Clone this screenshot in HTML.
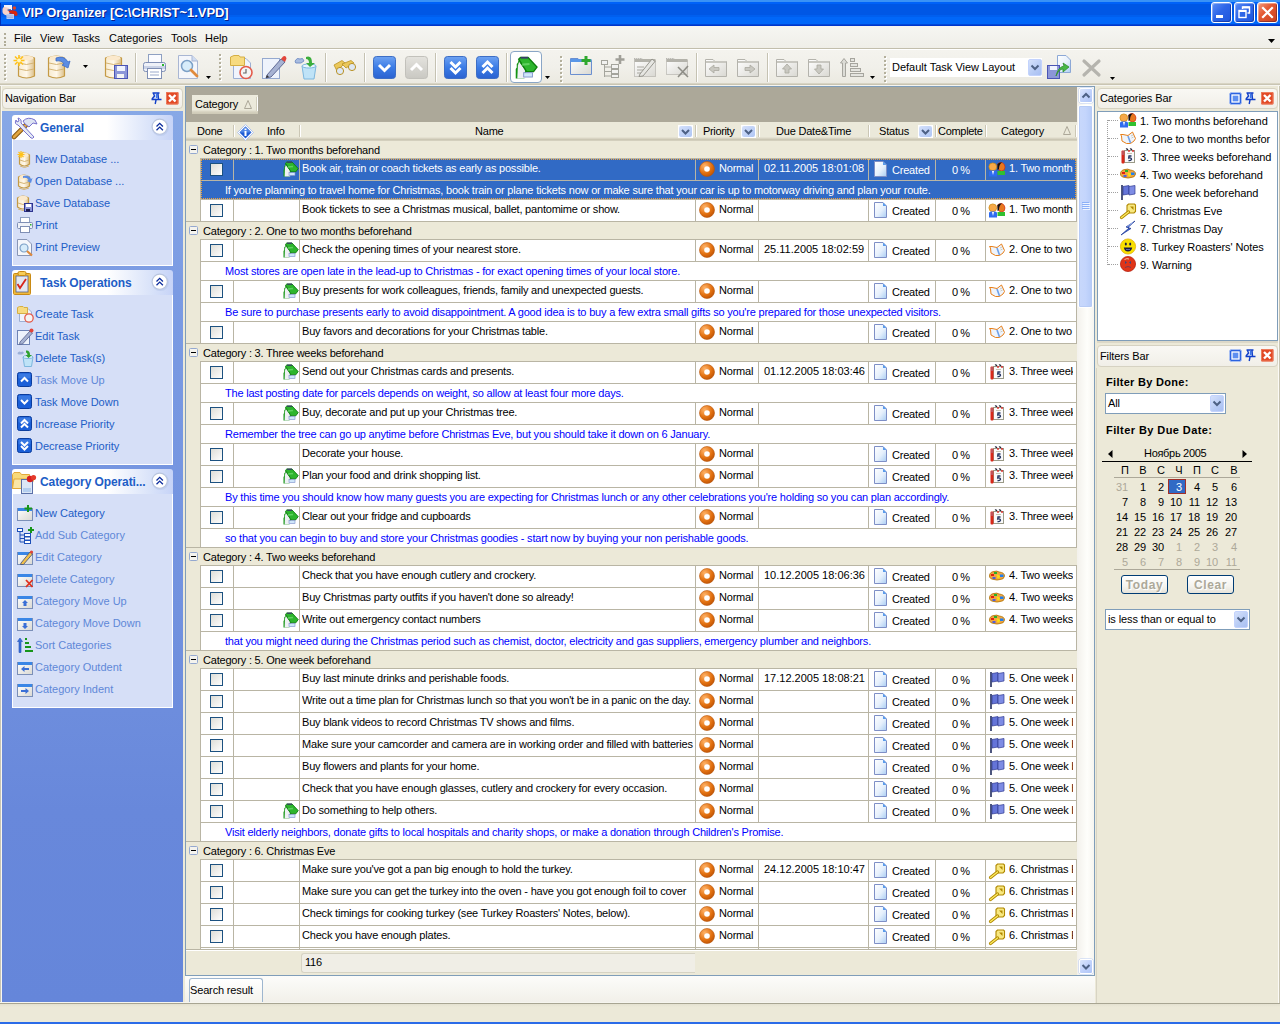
<!DOCTYPE html>
<html><head><meta charset="utf-8"><title>VIP Organizer</title>
<style>
html,body{margin:0;padding:0;}
body{width:1280px;height:1024px;overflow:hidden;position:relative;background:#ECE9D8;font-family:'Liberation Sans', sans-serif;font-size:11px;color:#000;}
body div{position:absolute;box-sizing:border-box;}
svg{position:absolute;overflow:visible;}
</style></head><body>
<div style="left:0px;top:0px;width:1280px;height:26px;background:linear-gradient(to bottom,#3A92F5 0px,#3A92F5 2px,#0062F8 2px,#0062F8 4px,#0057E5 4px,#0057E5 15px,#005FEF 15px,#005FEF 17px,#0067F9 17px,#0067F9 24px,#0048D8 24px,#0048D8 25px,#0036CC 25px);"></div><div style="left:0px;top:3px;width:1px;height:23px;background:#0030B8;"></div><svg style="left:0px;top:0px" width="26" height="26" viewBox="0 0 26 26" >
<rect x="4" y="5" width="8" height="5" fill="#F2F2FA"/>
<path d="M2.5 9 Q3 6.5 5 7 L9 8 L10 13 L7 15.5 Q3 14.5 2.5 12Z" fill="#F6D2CA"/>
<path d="M7 10 L8 9.5 L11 9 Q11 11 9 11Z" fill="#2A4FA8"/>
<path d="M8.5 11 Q12 9.5 16 11 Q18 12.5 17.5 15.5 L15 16 Q14 13 10 13.5Z" fill="#D8260E"/>
<circle cx="14.3" cy="8" r="1.8" fill="#E8401A"/>
<rect x="6.5" y="14" width="7.5" height="5" fill="#B9CBF2"/>
<path d="M7 16 H13 M7 17.5 H13" stroke="#8FA3D8" stroke-width=".6"/>
</svg><div style="left:22px;top:6px;font-size:13px;line-height:13px;color:#fff;white-space:nowrap;letter-spacing:-0.05px;font-weight:bold;text-shadow:1px 1px 0 #0A1E8A;">VIP Organizer [C:\CHRIST~1.VPD]</div><div style="left:1211px;top:2px;width:21px;height:21px;border:1px solid #fff;border-radius:3px;background:linear-gradient(135deg,#5C8DF5 0%,#2E66E8 45%,#1E55DC 100%);box-shadow:inset 1px 1px 0 rgba(255,255,255,.35), inset -1px -1px 0 rgba(0,0,60,.3);"></div><svg style="left:1211px;top:2px" width="21" height="21" viewBox="0 0 21 21" ><rect x="5" y="13" width="7" height="3" fill="#fff"/></svg><div style="left:1234px;top:2px;width:21px;height:21px;border:1px solid #fff;border-radius:3px;background:linear-gradient(135deg,#5C8DF5 0%,#2E66E8 45%,#1E55DC 100%);box-shadow:inset 1px 1px 0 rgba(255,255,255,.35), inset -1px -1px 0 rgba(0,0,60,.3);"></div><svg style="left:1234px;top:2px" width="21" height="21" viewBox="0 0 21 21" ><path d="M8.5 7 V5 H15.5 V11 H13.5" fill="none" stroke="#fff" stroke-width="1.4"/><rect x="5" y="8.5" width="7" height="7" fill="none" stroke="#fff" stroke-width="1.4"/><rect x="5" y="8" width="7" height="2" fill="#fff"/><rect x="8.5" y="4.5" width="7" height="2" fill="#fff"/></svg><div style="left:1257px;top:2px;width:21px;height:21px;border:1px solid #fff;border-radius:3px;background:linear-gradient(135deg,#F29B7E 0%,#E45A33 40%,#C9401E 100%);box-shadow:inset 1px 1px 0 rgba(255,255,255,.35), inset -1px -1px 0 rgba(0,0,60,.3);"></div><svg style="left:1257px;top:2px" width="21" height="21" viewBox="0 0 21 21" ><path d="M6 6 L15 15 M15 6 L6 15" stroke="#fff" stroke-width="2.2" stroke-linecap="square"/></svg><div style="left:0px;top:26px;width:1280px;height:22px;background:linear-gradient(to bottom,#F6F6F2,#EFEEE8);"></div><div style="left:0px;top:48px;width:1280px;height:1px;background:#C2BEAC;"></div><div style="left:0px;top:49px;width:1280px;height:1px;background:#FFFFFF;"></div><div style="left:4px;top:33px;width:2px;height:2px;background:#B0AC98;"></div><div style="left:4px;top:37px;width:2px;height:2px;background:#B0AC98;"></div><div style="left:4px;top:41px;width:2px;height:2px;background:#B0AC98;"></div><div style="left:4px;top:44px;width:2px;height:2px;background:#B0AC98;"></div><div style="left:14px;top:32px;font-size:11px;line-height:13px;color:#000;white-space:nowrap;">File</div><div style="left:40px;top:32px;font-size:11px;line-height:13px;color:#000;white-space:nowrap;">View</div><div style="left:72px;top:32px;font-size:11px;line-height:13px;color:#000;white-space:nowrap;">Tasks</div><div style="left:109px;top:32px;font-size:11px;line-height:13px;color:#000;white-space:nowrap;">Categories</div><div style="left:171px;top:32px;font-size:11px;line-height:13px;color:#000;white-space:nowrap;">Tools</div><div style="left:205px;top:32px;font-size:11px;line-height:13px;color:#000;white-space:nowrap;">Help</div><svg style="left:1268px;top:39px" width="7" height="5" viewBox="0 0 7 5" ><path d="M0 0 H7 L3.5 4Z" fill="#000"/></svg><div style="left:0px;top:50px;width:1280px;height:34px;background:linear-gradient(to bottom,#F4F3EE 0%,#F1F0EA 50%,#EBE9E0 100%);"></div><div style="left:0px;top:83px;width:1280px;height:1px;background:#D8D4C4;"></div><div style="left:0px;top:84px;width:1280px;height:1px;background:#C9C5B3;"></div><div style="left:0px;top:85px;width:1280px;height:1px;background:#F6F5F0;"></div><div style="left:4px;top:54px;width:2px;height:2px;background:#B4B09C;box-shadow:1px 1px 0 #fff;"></div><div style="left:4px;top:58px;width:2px;height:2px;background:#B4B09C;box-shadow:1px 1px 0 #fff;"></div><div style="left:4px;top:62px;width:2px;height:2px;background:#B4B09C;box-shadow:1px 1px 0 #fff;"></div><div style="left:4px;top:66px;width:2px;height:2px;background:#B4B09C;box-shadow:1px 1px 0 #fff;"></div><div style="left:4px;top:70px;width:2px;height:2px;background:#B4B09C;box-shadow:1px 1px 0 #fff;"></div><div style="left:4px;top:74px;width:2px;height:2px;background:#B4B09C;box-shadow:1px 1px 0 #fff;"></div><div style="left:4px;top:78px;width:2px;height:2px;background:#B4B09C;box-shadow:1px 1px 0 #fff;"></div><div style="left:219px;top:54px;width:2px;height:2px;background:#B4B09C;box-shadow:1px 1px 0 #fff;"></div><div style="left:219px;top:58px;width:2px;height:2px;background:#B4B09C;box-shadow:1px 1px 0 #fff;"></div><div style="left:219px;top:62px;width:2px;height:2px;background:#B4B09C;box-shadow:1px 1px 0 #fff;"></div><div style="left:219px;top:66px;width:2px;height:2px;background:#B4B09C;box-shadow:1px 1px 0 #fff;"></div><div style="left:219px;top:70px;width:2px;height:2px;background:#B4B09C;box-shadow:1px 1px 0 #fff;"></div><div style="left:219px;top:74px;width:2px;height:2px;background:#B4B09C;box-shadow:1px 1px 0 #fff;"></div><div style="left:219px;top:78px;width:2px;height:2px;background:#B4B09C;box-shadow:1px 1px 0 #fff;"></div><div style="left:560px;top:56px;width:2px;height:2px;background:#B4B09C;box-shadow:1px 1px 0 #fff;"></div><div style="left:560px;top:60px;width:2px;height:2px;background:#B4B09C;box-shadow:1px 1px 0 #fff;"></div><div style="left:560px;top:64px;width:2px;height:2px;background:#B4B09C;box-shadow:1px 1px 0 #fff;"></div><div style="left:560px;top:68px;width:2px;height:2px;background:#B4B09C;box-shadow:1px 1px 0 #fff;"></div><div style="left:560px;top:72px;width:2px;height:2px;background:#B4B09C;box-shadow:1px 1px 0 #fff;"></div><div style="left:560px;top:76px;width:2px;height:2px;background:#B4B09C;box-shadow:1px 1px 0 #fff;"></div><div style="left:560px;top:80px;width:2px;height:2px;background:#B4B09C;box-shadow:1px 1px 0 #fff;"></div><div style="left:884px;top:56px;width:2px;height:2px;background:#B4B09C;box-shadow:1px 1px 0 #fff;"></div><div style="left:884px;top:60px;width:2px;height:2px;background:#B4B09C;box-shadow:1px 1px 0 #fff;"></div><div style="left:884px;top:64px;width:2px;height:2px;background:#B4B09C;box-shadow:1px 1px 0 #fff;"></div><div style="left:884px;top:68px;width:2px;height:2px;background:#B4B09C;box-shadow:1px 1px 0 #fff;"></div><div style="left:884px;top:72px;width:2px;height:2px;background:#B4B09C;box-shadow:1px 1px 0 #fff;"></div><div style="left:884px;top:76px;width:2px;height:2px;background:#B4B09C;box-shadow:1px 1px 0 #fff;"></div><div style="left:884px;top:80px;width:2px;height:2px;background:#B4B09C;box-shadow:1px 1px 0 #fff;"></div><div style="left:135px;top:53px;width:1px;height:29px;background:#C5C2B2;box-shadow:1px 0 0 #fff;"></div><div style="left:325px;top:53px;width:1px;height:29px;background:#C5C2B2;box-shadow:1px 0 0 #fff;"></div><div style="left:364px;top:53px;width:1px;height:29px;background:#C5C2B2;box-shadow:1px 0 0 #fff;"></div><div style="left:435px;top:53px;width:1px;height:29px;background:#C5C2B2;box-shadow:1px 0 0 #fff;"></div><div style="left:506px;top:53px;width:1px;height:29px;background:#C5C2B2;box-shadow:1px 0 0 #fff;"></div><div style="left:696px;top:53px;width:1px;height:29px;background:#C5C2B2;box-shadow:1px 0 0 #fff;"></div><div style="left:767px;top:53px;width:1px;height:29px;background:#C5C2B2;box-shadow:1px 0 0 #fff;"></div><svg style="left:0;top:0" width="0" height="0"><defs><linearGradient id="cylg" x1="0" x2="1"><stop offset="0" stop-color="#F7EBD0"/><stop offset=".5" stop-color="#FFF8EA"/><stop offset="1" stop-color="#DCC08A"/></linearGradient></defs><defs>
<linearGradient id="bluebtn" x1="0" y1="0" x2="0" y2="1"><stop offset="0" stop-color="#6FA3F2"/><stop offset=".5" stop-color="#3B7CE6"/><stop offset="1" stop-color="#2A62D0"/></linearGradient>
<linearGradient id="graybtn" x1="0" y1="0" x2="0" y2="1"><stop offset="0" stop-color="#E4E3DE"/><stop offset="1" stop-color="#C9C8C2"/></linearGradient>
<linearGradient id="docg" x1="0" y1="0" x2="1" y2="1"><stop offset="0" stop-color="#FFFFFF"/><stop offset=".55" stop-color="#E6F0FC"/><stop offset="1" stop-color="#A9CDF3"/></linearGradient>
<linearGradient id="foldg" x1="0" y1="0" x2="1" y2="1"><stop offset="0" stop-color="#FFFFFF"/><stop offset="1" stop-color="#D9D8D2"/></linearGradient>
<radialGradient id="orng" cx=".35" cy=".3" r=".8"><stop offset="0" stop-color="#FFB46A"/><stop offset=".6" stop-color="#E2700F"/><stop offset="1" stop-color="#B84F05"/></radialGradient>
<linearGradient id="chkg" x1="0" y1="0" x2="1" y2="1"><stop offset="0" stop-color="#DCDCD6"/><stop offset="1" stop-color="#FFFFFF"/></linearGradient>
</defs></svg><svg style="left:13px;top:55px" width="24" height="25" viewBox="0 0 24 25" ><path d="M5.5 3 Q13.5 -1 21.5 3 V21 Q13.5 25 5.5 21Z" fill="url(#cylg)" stroke="#C49A45" stroke-width="1.2"/><path d="M6 8 Q13.5 11 21 8 M6 14 Q13.5 17 21 14" fill="none" stroke="#D5B577" stroke-width="1"/><ellipse cx="13.5" cy="3" rx="7.0" ry="2.3" fill="#FBE9CC"/><g stroke="#FFC21A" stroke-width="1.6"><path d="M6 0 V11 M0.5 5.5 H11.5 M2 1.5 L10 9.5 M10 1.5 L2 9.5"/></g><circle cx="6" cy="5.5" r="2" fill="#FFF7C0"/></svg><svg style="left:48px;top:55px" width="24" height="25" viewBox="0 0 24 25" ><path d="M0.5 3 Q8.5 -1 16.5 3 V21 Q8.5 25 0.5 21Z" fill="url(#cylg)" stroke="#C49A45" stroke-width="1.2"/><path d="M1 8 Q8.5 11 16 8 M1 14 Q8.5 17 16 14" fill="none" stroke="#D5B577" stroke-width="1"/><ellipse cx="8.5" cy="3" rx="7.0" ry="2.3" fill="#FBE9CC"/><path d="M8 3 Q16 0 20 7 L22 6 L20 13 L14 10 L16 9 Q14 5 8 6Z" fill="#5C8DE3" stroke="#3D6BC4" stroke-width=".8"/></svg><svg style="left:83px;top:65px" width="5" height="3" viewBox="0 0 5 3" ><path d="M0 0 H5 L2.5 3Z" fill="#000"/></svg><svg style="left:105px;top:55px" width="24" height="25" viewBox="0 0 24 25" ><path d="M0.5 3 Q8.5 -1 16.5 3 V21 Q8.5 25 0.5 21Z" fill="url(#cylg)" stroke="#C49A45" stroke-width="1.2"/><path d="M1 8 Q8.5 11 16 8 M1 14 Q8.5 17 16 14" fill="none" stroke="#D5B577" stroke-width="1"/><ellipse cx="8.5" cy="3" rx="7.0" ry="2.3" fill="#FBE9CC"/><rect x="9.5" y="10.5" width="13" height="13" fill="#8C96D8" stroke="#4B55B5"/><rect x="12" y="11" width="8" height="5" fill="#F0F4FF"/><rect x="12" y="19" width="7" height="4" fill="#F4F4F4"/></svg><svg style="left:143px;top:54px" width="24" height="26" viewBox="0 0 24 26" ><rect x="5.5" y="0.5" width="13" height="8" fill="#FAFBFF" stroke="#8EA0C2"/>
<rect x="0.5" y="8.5" width="22" height="9" rx="2" fill="#EEF1F8" stroke="#7F8FB5"/>
<rect x="1" y="12" width="21" height="3" fill="#C9D2E6"/>
<rect x="19" y="10" width="2" height="2" fill="#2BB52B"/>
<rect x="4.5" y="14.5" width="14" height="10" fill="#FFFFFF" stroke="#7F8FB5"/>
<path d="M7 18 H16 M7 21 H16" stroke="#9AA9CB"/></svg><svg style="left:178px;top:55px" width="23" height="24" viewBox="0 0 23 24" ><path d="M0.5 0.5 H14 L19.5 6 V23.5 H0.5Z" fill="#F4F6FB" stroke="#A9B6D3"/>
<path d="M14 0.5 V6 H19.5" fill="#CFDCF2" stroke="#A9B6D3"/>
<circle cx="9" cy="11" r="5.5" fill="#D7ECFA" stroke="#7CA0C7" stroke-width="1.5"/>
<path d="M13 15 L19 21" stroke="#E08A3C" stroke-width="2.8" stroke-linecap="round"/></svg><svg style="left:206px;top:76px" width="5" height="3" viewBox="0 0 5 3" ><path d="M0 0 H5 L2.5 3Z" fill="#000"/></svg><svg style="left:230px;top:55px" width="25" height="25" viewBox="0 0 25 25" ><path d="M3.5 3.5 H16 L20.5 8 V23.5 H3.5Z" fill="#F0F4FC" stroke="#9DB0D4"/>
<path d="M0.5 2 L4 0.5 H9 L10 2 H14.5 V10.5 H0.5Z" fill="#F7DB80" stroke="#D5AF44"/>
<circle cx="16" cy="17.5" r="6" fill="#F4F4F4" stroke="#E45B4B" stroke-width="1.6"/>
<path d="M16 14 V18 H13" stroke="#666" stroke-width="1.2" fill="none"/></svg><svg style="left:262px;top:55px" width="25" height="25" viewBox="0 0 25 25" ><rect x="0.5" y="3.5" width="17" height="20" fill="#EEF3FC" stroke="#95A9CF"/>
<path d="M5 20 L19 4 L23 7 L9 22 L4 23Z" fill="#A7B3D3" stroke="#56608C" stroke-width=".9"/>
<path d="M19 4 L21 1.5 Q23 0.5 24 2 L24.5 3.5 L23 7Z" fill="#E2453B"/>
<path d="M4 23 L5 20 L7 22Z" fill="#333"/></svg><svg style="left:294px;top:55px" width="25" height="25" viewBox="0 0 25 25" ><path d="M8 11 H22 L20 24 H10Z" fill="#BFE3F7" stroke="#7DB7DE"/>
<ellipse cx="15" cy="11" rx="7" ry="2" fill="#E8F6FD" stroke="#7DB7DE"/>
<path d="M12 2 Q18 0 18 8 L21 8 L16 12 L12 8 L15 8 Q15 4 12 4Z" fill="#3BAE3B"/>
<path d="M1 6 Q3 2 6 4 Q9 2 10 6 Q7 9 4 8 Q1 9 1 6Z" fill="#A8BCE0" stroke="#6A86C0" stroke-width=".8"/></svg><svg style="left:333px;top:60px" width="25" height="15" viewBox="0 0 25 15" ><path d="M1 5 L9 0.5 L12 3 L4 11Z" fill="#EBC85A" stroke="#B99225" stroke-width=".8"/>
<path d="M9 4 L18 0.5 L21 3 L13 8Z" fill="#EBC85A" stroke="#B99225" stroke-width=".8"/>
<circle cx="7" cy="11" r="3.6" fill="#DDE7F3" stroke="#B99225"/>
<circle cx="19" cy="7" r="3.6" fill="#DDE7F3" stroke="#B99225"/></svg><svg style="left:373px;top:56px" width="23" height="23" viewBox="0 0 23 23" ><rect x="0.5" y="0.5" width="22" height="22" rx="3" fill="url(#bluebtn)" stroke="#3D6EC5"/><path d="M6 9 L11.5 14.5 L17 9" fill="none" stroke="#fff" stroke-width="3"/></svg><svg style="left:405px;top:56px" width="23" height="23" viewBox="0 0 23 23" ><rect x="0.5" y="0.5" width="22" height="22" rx="3" fill="url(#graybtn)" stroke="#C2C1BB"/><path d="M6 14 L11.5 8.5 L17 14" fill="none" stroke="#fff" stroke-width="3"/></svg><svg style="left:444px;top:56px" width="23" height="23" viewBox="0 0 23 23" ><rect x="0.5" y="0.5" width="22" height="22" rx="3" fill="url(#bluebtn)" stroke="#3D6EC5"/><path d="M6.5 6 L11.5 11 L16.5 6 M6.5 12 L11.5 17 L16.5 12" fill="none" stroke="#fff" stroke-width="3"/></svg><svg style="left:476px;top:56px" width="23" height="23" viewBox="0 0 23 23" ><rect x="0.5" y="0.5" width="22" height="22" rx="3" fill="url(#bluebtn)" stroke="#3D6EC5"/><path d="M6.5 11 L11.5 6 L16.5 11 M6.5 17 L11.5 12 L16.5 17" fill="none" stroke="#fff" stroke-width="3"/></svg><div style="left:510px;top:51px;width:32px;height:32px;background:#fff;border:1px solid #8AA6C6;border-radius:4px;"></div><svg style="left:515px;top:56px" width="24" height="24" viewBox="0 0 24 24" ><g transform="scale(1.45)"><path d="M0.5 15.5 V9 L1.2 8 V5.5 L2 4.5 L2.5 2.5 L8 10.5 L6.5 15.5Z" fill="#149414"/>
<path d="M1.6 15.5 L2 6.5 L2.8 4 L6.8 9.5 L7.2 15.5Z" fill="#EEF0F4"/>
<path d="M2.5 2.2 L3.8 1 H9 L15.2 7.6 L12.8 10.8 H8Z" fill="#2DB52D" stroke="#0B7D0B" stroke-width="0.9"/>
<path d="M5 6 L10 5.5" stroke="#5FD05F" stroke-width="1.5"/>
<path d="M4 1.2 H9" stroke="#3A3A6A" stroke-width="1.2"/>
<rect x="6" y="11.5" width="6" height="3" fill="#CFE6FA" stroke="#7A8CC8" stroke-width=".6"/></g></svg><svg style="left:545px;top:76px" width="5" height="3" viewBox="0 0 5 3" ><path d="M0 0 H5 L2.5 3Z" fill="#000"/></svg><svg style="left:570px;top:55px" width="24" height="22" viewBox="0 0 24 22" ><path d="M0.5 3.5 V19.5 H21.5 V5.5 H10 L8 3.5Z" fill="url(#foldg)" stroke="#6B8FD0"/><rect x="0.5" y="4" width="21" height="3" fill="#5A97E8"/><path d="M16 1 V10 M11.5 5.5 H20.5" stroke="#2EA82E" stroke-width="3"/></svg><svg style="left:601px;top:55px" width="25" height="23" viewBox="0 0 25 23" ><rect x="0.5" y="5.5" width="6" height="4" fill="#F2F2F0" stroke="#A4A49C"/>
<path d="M3.5 9.5 V22 M3.5 12 H11 M3.5 16.5 H11 M3.5 21 H11" stroke="#A4A49C"/>
<rect x="10.5" y="9.5" width="7" height="4" fill="#F2F2F0" stroke="#A4A49C"/>
<rect x="10.5" y="14.5" width="7" height="4" fill="#F2F2F0" stroke="#A4A49C"/>
<rect x="10.5" y="19.5" width="7" height="3" fill="#F2F2F0" stroke="#A4A49C"/>
<path d="M19 0 V9 M14.5 4.5 H23.5" stroke="#A09F98" stroke-width="2.6"/></svg><svg style="left:634px;top:55px" width="23" height="22" viewBox="0 0 23 22" ><path d="M0.5 3.5 V21.5 H21.5 V5.5 H10 L8 3.5Z" fill="url(#foldg)" stroke="#A2A19A" stroke-dasharray="1 1"/>
<rect x="0.5" y="4" width="21" height="3" fill="#B3B2AA"/>
<path d="M3 12 H10 M3 15 H10 M3 18 H10" stroke="#A8A79F"/>
<path d="M6 19 L18 4 L21 6.5 L9 21 L5 21.5Z" fill="#E6E6E2" stroke="#8E8D86" stroke-width=".9"/></svg><svg style="left:666px;top:55px" width="24" height="23" viewBox="0 0 24 23" ><path d="M0.5 3.5 V19.5 H21.5 V5.5 H10 L8 3.5Z" fill="url(#foldg)" stroke="#A2A19A" stroke-dasharray="1 1"/>
<rect x="0.5" y="4" width="21" height="3" fill="#B3B2AA"/>
<path d="M12 12 L22 22 M22 11 L12 22" stroke="#8E8D86" stroke-width="1.6"/></svg><svg style="left:705px;top:58px" width="23" height="19" viewBox="0 0 23 19" ><path d="M0.5 1.5 V18.5 H21.5 V3.5 H10 L8 1.5 H0.5Z" fill="url(#foldg)" stroke="#B4B3AC"/><rect x="1" y="3" width="20" height="2" fill="#C8C7C0"/><path d="M4 11 L9 7 V9.5 H14 V12.5 H9 V15Z" fill="#C9C8C1" stroke="#A9A8A0" stroke-width=".8"/></svg><svg style="left:737px;top:58px" width="23" height="19" viewBox="0 0 23 19" ><path d="M0.5 1.5 V18.5 H21.5 V3.5 H10 L8 1.5 H0.5Z" fill="url(#foldg)" stroke="#B4B3AC"/><rect x="1" y="3" width="20" height="2" fill="#C8C7C0"/><path d="M18 11 L13 7 V9.5 H8 V12.5 H13 V15Z" fill="#C9C8C1" stroke="#A9A8A0" stroke-width=".8"/></svg><svg style="left:776px;top:58px" width="23" height="19" viewBox="0 0 23 19" ><path d="M0.5 1.5 V18.5 H21.5 V3.5 H10 L8 1.5 H0.5Z" fill="url(#foldg)" stroke="#B4B3AC"/><rect x="1" y="3" width="20" height="2" fill="#C8C7C0"/><path d="M11 6 L15.5 11 H13 V15 H9 V11 H6.5Z" fill="#C9C8C1" stroke="#A9A8A0" stroke-width=".8"/></svg><svg style="left:808px;top:58px" width="23" height="19" viewBox="0 0 23 19" ><path d="M0.5 1.5 V18.5 H21.5 V3.5 H10 L8 1.5 H0.5Z" fill="url(#foldg)" stroke="#B4B3AC"/><rect x="1" y="3" width="20" height="2" fill="#C8C7C0"/><path d="M11 16 L15.5 11 H13 V7 H9 V11 H6.5Z" fill="#C9C8C1" stroke="#A9A8A0" stroke-width=".8"/></svg><svg style="left:840px;top:58px" width="24" height="19" viewBox="0 0 24 19" ><path d="M4 0.5 L7.5 5 H5.5 V18.5 H2.5 V5 H0.5Z" fill="#DCDCD6" stroke="#A6A59E"/>
<rect x="10.5" y="0.5" width="4" height="3" fill="#E4E4DF" stroke="#A6A59E"/>
<rect x="10.5" y="5.5" width="7" height="3" fill="#E4E4DF" stroke="#A6A59E"/>
<rect x="10.5" y="10.5" width="10" height="3" fill="#E4E4DF" stroke="#A6A59E"/>
<rect x="10.5" y="15.5" width="13" height="3" fill="#E4E4DF" stroke="#A6A59E"/></svg><svg style="left:870px;top:76px" width="5" height="3" viewBox="0 0 5 3" ><path d="M0 0 H5 L2.5 3Z" fill="#000"/></svg><div style="left:890px;top:58px;width:152px;height:19px;background:#fff;"></div><div style="left:892px;top:61px;font-size:11px;line-height:13px;color:#000;white-space:nowrap;">Default Task View Layout</div><div style="left:1028px;top:59px;width:14px;height:17px;border-radius:2px;background:linear-gradient(135deg,#D5E1FB 0%,#B7CBF5 60%,#A8BFF2 100%);border:1px solid #C3D3FD;"></div><svg style="left:1028px;top:59px" width="14" height="17" viewBox="0 0 14 17" ><path d="M3.5 6.5 L7.0 10.0 L10.5 6.5" fill="none" stroke="#4D6185" stroke-width="2"/></svg><svg style="left:1047px;top:55px" width="25" height="25" viewBox="0 0 25 25" ><path d="M10.5 0.5 H19 L23.5 5 V17.5 H10.5Z" fill="url(#docg)" stroke="#8CA8D6"/>
<rect x="0.5" y="10.5" width="12" height="13" fill="#8C96D8" stroke="#4B55B5"/><rect x="3" y="11" width="7" height="4" fill="#F0F4FF"/>
<path d="M9 21 Q11 12 17 11 L16 8 L22 12 L16 17 L16 14 Q12 14 9 21Z" fill="#46B846" stroke="#2E8E2E" stroke-width=".8"/></svg><svg style="left:1082px;top:60px" width="19" height="16" viewBox="0 0 19 16" ><path d="M2 1 L17 15 M17 1 L2 15" stroke="#B5B4AE" stroke-width="3.2" stroke-linecap="round"/></svg><svg style="left:1110px;top:77px" width="5" height="3" viewBox="0 0 5 3" ><path d="M0 0 H5 L2.5 3Z" fill="#000"/></svg><div style="left:0px;top:86px;width:185px;height:917px;background:#ECE9D8;"></div><div style="left:0px;top:86px;width:1px;height:917px;background:#C8C4B2;"></div><div style="left:1px;top:86px;width:1px;height:917px;background:#F8F7F2;"></div><div style="left:2px;top:88px;width:181px;height:21px;border:1px solid #D6D2C2;border-radius:4px;background:linear-gradient(to bottom,#F9F8F4,#F1EFE8);"></div><div style="left:5px;top:92px;font-size:11px;line-height:13px;color:#000;white-space:nowrap;letter-spacing:-0.1px;">Navigation Bar</div><svg style="left:151px;top:92px" width="12" height="13" viewBox="0 0 12 13" ><path d="M2.5 1.5 L3.5 4 L1.5 7 H8 L7 1.5Z" fill="#D6E0FA"/><rect x="5" y="2" width="1.5" height="4" fill="#3C78E8"/><path d="M1.5 1 H8.5 M2.5 1.5 L3.5 4 L1 7 M7 1.5 L7.5 7 M0.5 7.5 H10.5 M5 8 L4.2 12" fill="none" stroke="#1240C8" stroke-width="1.4"/></svg><svg style="left:166px;top:92px" width="13" height="13" viewBox="0 0 13 13" ><rect x="0" y="0" width="12.5" height="12.5" rx="1" fill="#E24A26"/><rect x="0.5" y="0.5" width="11.5" height="11.5" rx="1" fill="none" stroke="#F08A6C" stroke-width=".8"/><path d="M3 3 L9.5 9.5 M9.5 3 L3 9.5" stroke="#fff" stroke-width="2.4"/></svg><div style="left:2px;top:111px;width:181px;height:891px;background:linear-gradient(to bottom,#87A8E6 0px,#7B9BE3 180px,#7292DF 500px,#6888DB 700px,#6586DA 891px);"></div><div style="left:12px;top:115px;width:161px;height:25px;border-radius:3px 3px 0 0;background:linear-gradient(to right,#FFFFFF 0px,#FFFFFF 95px,#D8E2F9 140px,#C6D3F7 161px);"></div><svg style="left:12px;top:116px" width="26" height="24" viewBox="0 0 26 24" ><path d="M2 21 L14 9" stroke="#8A5A12" stroke-width="4.6" stroke-linecap="round"/><path d="M2 21 L14 9" stroke="#E2A640" stroke-width="2.6" stroke-linecap="round"/>
<path d="M11 5 Q16 0 23 4 L25 8 L21 7 L17 11 L13 8Z" fill="#DDE3F2" stroke="#6A63C8" stroke-width=".9"/>
<path d="M4 4 Q2 8 6 9 L19 22 Q21 23 22 21 L9 7 Q10 3 6 2 L7 5 L5 6Z" fill="#E6EBF5" stroke="#6A63C8" stroke-width=".9"/></svg><svg style="left:150px;top:117px" width="20" height="20" viewBox="0 0 20 20" ><circle cx="10.3" cy="10.3" r="8.6" fill="#AFC0E6" opacity=".45"/><circle cx="9.7" cy="9.7" r="7.6" fill="#fff" stroke="#B9C5DE" stroke-width="1.1"/><path d="M6.5 9.5 L9.7 6.3 L12.9 9.5 M6.5 13.3 L9.7 10.1 L12.9 13.3" fill="none" stroke="#0C2C9C" stroke-width="1.3"/></svg><div style="left:40px;top:122px;font-size:12px;line-height:13px;color:#215DC6;white-space:nowrap;letter-spacing:-0.1px;font-weight:bold;">General</div><div style="left:12px;top:140px;width:161px;height:126px;background:#D6DFF7;border:1px solid #fff;border-top:none;"></div><svg style="left:17px;top:151px" width="17" height="17" viewBox="0 0 17 17" ><path d="M2.5 4 Q7.5 0 12.5 4 V13 Q7.5 17 2.5 13Z" fill="url(#cylg)" stroke="#C49A45" stroke-width="1.2"/><path d="M3 9 Q7.5 12 12 9 M3 15 Q7.5 18 12 15" fill="none" stroke="#D5B577" stroke-width="1"/><ellipse cx="7.5" cy="4" rx="4.0" ry="2.3" fill="#FBE9CC"/><path d="M4 0 V7 M0.5 3.5 H7.5 M1.5 1 L6.5 6 M6.5 1 L1.5 6" stroke="#FFC21A" stroke-width="1.2"/></svg><div style="left:35px;top:153px;font-size:11px;line-height:13px;color:#215DC6;white-space:nowrap;">New Database ...</div><svg style="left:17px;top:173px" width="17" height="17" viewBox="0 0 17 17" ><path d="M1.5 4 Q7.0 0 12.5 4 V13 Q7.0 17 1.5 13Z" fill="url(#cylg)" stroke="#C49A45" stroke-width="1.2"/><path d="M2 9 Q7.0 12 12 9 M2 15 Q7.0 18 12 15" fill="none" stroke="#D5B577" stroke-width="1"/><ellipse cx="7.0" cy="4" rx="4.5" ry="2.3" fill="#FBE9CC"/><path d="M6 3 Q12 1 14 6 L15.5 5 L14 10 L10 8 L11.5 7 Q10 4 6 5Z" fill="#5C8DE3"/></svg><div style="left:35px;top:175px;font-size:11px;line-height:13px;color:#215DC6;white-space:nowrap;">Open Database ...</div><svg style="left:17px;top:195px" width="17" height="17" viewBox="0 0 17 17" ><path d="M0.5 3 Q6.0 -1 11.5 3 V12 Q6.0 16 0.5 12Z" fill="url(#cylg)" stroke="#C49A45" stroke-width="1.2"/><path d="M1 8 Q6.0 11 11 8 M1 14 Q6.0 17 11 14" fill="none" stroke="#D5B577" stroke-width="1"/><ellipse cx="6.0" cy="3" rx="4.5" ry="2.3" fill="#FBE9CC"/><rect x="7.5" y="8.5" width="8" height="8" fill="#8C96D8" stroke="#2E3590"/><rect x="9" y="9" width="5" height="3" fill="#fff"/><rect x="9" y="14" width="4" height="2.5" fill="#1C1C50"/></svg><div style="left:35px;top:197px;font-size:11px;line-height:13px;color:#215DC6;white-space:nowrap;">Save Database</div><svg style="left:17px;top:217px" width="17" height="17" viewBox="0 0 17 17" ><rect x="3.5" y="0.5" width="9" height="5" fill="#fff" stroke="#8EA0C2"/><rect x="0.5" y="5.5" width="15" height="6" rx="1" fill="#EEF1F8" stroke="#7F8FB5"/><rect x="13" y="7" width="1.5" height="1.5" fill="#2BB52B"/><rect x="3.5" y="9.5" width="9" height="6" fill="#fff" stroke="#7F8FB5"/></svg><div style="left:35px;top:219px;font-size:11px;line-height:13px;color:#215DC6;white-space:nowrap;">Print</div><svg style="left:17px;top:239px" width="17" height="17" viewBox="0 0 17 17" ><path d="M0.5 0.5 H10 L14.5 5 V16.5 H0.5Z" fill="#F4F6FB" stroke="#8996B6"/><circle cx="7" cy="9" r="4" fill="#D7ECFA" stroke="#7CA0C7" stroke-width="1.2"/><path d="M10 12 L15 16.5" stroke="#E08A3C" stroke-width="2.2"/></svg><div style="left:35px;top:241px;font-size:11px;line-height:13px;color:#215DC6;white-space:nowrap;">Print Preview</div><div style="left:12px;top:270px;width:161px;height:25px;border-radius:3px 3px 0 0;background:linear-gradient(to right,#FFFFFF 0px,#FFFFFF 95px,#D8E2F9 140px,#C6D3F7 161px);"></div><svg style="left:12px;top:271px" width="26" height="24" viewBox="0 0 26 24" ><rect x="1.5" y="2.5" width="17" height="21" rx="1" fill="#F0B93A" stroke="#C98A14"/><rect x="4" y="5" width="12" height="16" fill="#E3E7F0" stroke="#53608A" stroke-width=".8"/>
<rect x="6" y="0.5" width="8" height="4" rx="1.5" fill="#F7CD59" stroke="#C98A14"/><path d="M5.5 13 L8 17 L14 8" fill="none" stroke="#D8261C" stroke-width="1.8"/></svg><svg style="left:150px;top:272px" width="20" height="20" viewBox="0 0 20 20" ><circle cx="10.3" cy="10.3" r="8.6" fill="#AFC0E6" opacity=".45"/><circle cx="9.7" cy="9.7" r="7.6" fill="#fff" stroke="#B9C5DE" stroke-width="1.1"/><path d="M6.5 9.5 L9.7 6.3 L12.9 9.5 M6.5 13.3 L9.7 10.1 L12.9 13.3" fill="none" stroke="#0C2C9C" stroke-width="1.3"/></svg><div style="left:40px;top:277px;font-size:12px;line-height:13px;color:#215DC6;white-space:nowrap;letter-spacing:-0.1px;font-weight:bold;">Task Operations</div><div style="left:12px;top:295px;width:161px;height:170px;background:#D6DFF7;border:1px solid #fff;border-top:none;"></div><svg style="left:17px;top:306px" width="17" height="17" viewBox="0 0 17 17" ><path d="M2.5 2.5 H11 L14.5 6 V15.5 H2.5Z" fill="#F0F4FC" stroke="#9DB0D4"/><path d="M0.5 1.5 L2.5 0.5 H6 L7 1.5 H10.5 V7.5 H0.5Z" fill="#F7DB80" stroke="#D5AF44"/><circle cx="12" cy="12" r="4.2" fill="#F4F4F4" stroke="#E45B4B" stroke-width="1.3"/></svg><div style="left:35px;top:308px;font-size:11px;line-height:13px;color:#215DC6;white-space:nowrap;">Create Task</div><svg style="left:17px;top:328px" width="17" height="17" viewBox="0 0 17 17" ><rect x="0.5" y="2.5" width="12" height="14" fill="#EEF3FC" stroke="#6E83B5"/><path d="M3 14 L13 3 L15.5 5 L5.5 16 L2.5 16.5Z" fill="#A7B3D3" stroke="#56608C" stroke-width=".8"/><circle cx="14.5" cy="2.5" r="2" fill="#E2453B"/></svg><div style="left:35px;top:330px;font-size:11px;line-height:13px;color:#215DC6;white-space:nowrap;">Edit Task</div><svg style="left:17px;top:350px" width="17" height="17" viewBox="0 0 17 17" ><path d="M6 7 H16 L14.5 16.5 H7.5Z" fill="#BFE3F7" stroke="#7DB7DE"/><ellipse cx="11" cy="7" rx="5" ry="1.5" fill="#E8F6FD" stroke="#7DB7DE"/><path d="M9 0.5 Q13 0 13 5 L15 5 L11.5 8 L8.5 5 L10.5 5 Q10.5 2.5 9 2.5Z" fill="#2EA12E"/><path d="M0.5 3 Q2 0.5 4 2 Q6 0.5 7 3 Q5 5 3 4.5 Q0.5 5 0.5 3Z" fill="#9BB0D8"/></svg><div style="left:35px;top:352px;font-size:11px;line-height:13px;color:#215DC6;white-space:nowrap;">Delete Task(s)</div><svg style="left:17px;top:372px" width="17" height="17" viewBox="0 0 17 17" ><rect x="0.5" y="0.5" width="14" height="14" rx="2" fill="#1A5FD8" stroke="#0B3D9E"/><rect x="1.5" y="1.5" width="12" height="5" rx="1" fill="#4F8BEA" opacity=".6"/><path d="M4 9.5 L7.5 6 L11 9.5" fill="none" stroke="#fff" stroke-width="2"/></svg><div style="left:35px;top:374px;font-size:11px;line-height:13px;color:#5F88D8;white-space:nowrap;">Task Move Up</div><svg style="left:17px;top:394px" width="17" height="17" viewBox="0 0 17 17" ><rect x="0.5" y="0.5" width="14" height="14" rx="2" fill="#1A5FD8" stroke="#0B3D9E"/><rect x="1.5" y="1.5" width="12" height="5" rx="1" fill="#4F8BEA" opacity=".6"/><path d="M4 6 L7.5 9.5 L11 6" fill="none" stroke="#fff" stroke-width="2"/></svg><div style="left:35px;top:396px;font-size:11px;line-height:13px;color:#215DC6;white-space:nowrap;">Task Move Down</div><svg style="left:17px;top:416px" width="17" height="17" viewBox="0 0 17 17" ><rect x="0.5" y="0.5" width="14" height="14" rx="2" fill="#1A5FD8" stroke="#0B3D9E"/><rect x="1.5" y="1.5" width="12" height="5" rx="1" fill="#4F8BEA" opacity=".6"/><path d="M4 7.5 L7.5 4 L11 7.5 M4 11.5 L7.5 8 L11 11.5" fill="none" stroke="#fff" stroke-width="2"/></svg><div style="left:35px;top:418px;font-size:11px;line-height:13px;color:#215DC6;white-space:nowrap;">Increase Priority</div><svg style="left:17px;top:438px" width="17" height="17" viewBox="0 0 17 17" ><rect x="0.5" y="0.5" width="14" height="14" rx="2" fill="#1A5FD8" stroke="#0B3D9E"/><rect x="1.5" y="1.5" width="12" height="5" rx="1" fill="#4F8BEA" opacity=".6"/><path d="M4 4 L7.5 7.5 L11 4 M4 8 L7.5 11.5 L11 8" fill="none" stroke="#fff" stroke-width="2"/></svg><div style="left:35px;top:440px;font-size:11px;line-height:13px;color:#215DC6;white-space:nowrap;">Decrease Priority</div><div style="left:12px;top:469px;width:161px;height:25px;border-radius:3px 3px 0 0;background:linear-gradient(to right,#FFFFFF 0px,#FFFFFF 95px,#D8E2F9 140px,#C6D3F7 161px);"></div><svg style="left:12px;top:470px" width="26" height="24" viewBox="0 0 26 24" ><path d="M0.5 4.5 L2 2.5 H8 L9.5 4.5 H17.5 V18.5 H0.5Z" fill="#F7D97A" stroke="#E3A93A"/><path d="M2 9 H22 L18 18.5 H0.5Z" fill="#FBE7A6" stroke="#E3A93A"/>
<rect x="9.5" y="9.5" width="11" height="14" fill="#DCE7F6" stroke="#5A6FA8"/><path d="M11 19 H19 M11 21 H19" stroke="#8BB4E8"/>
<circle cx="18" cy="9" r="3.2" fill="#D81F1F"/><circle cx="21.5" cy="7.5" r="2.6" fill="#E53A2B"/></svg><svg style="left:150px;top:471px" width="20" height="20" viewBox="0 0 20 20" ><circle cx="10.3" cy="10.3" r="8.6" fill="#AFC0E6" opacity=".45"/><circle cx="9.7" cy="9.7" r="7.6" fill="#fff" stroke="#B9C5DE" stroke-width="1.1"/><path d="M6.5 9.5 L9.7 6.3 L12.9 9.5 M6.5 13.3 L9.7 10.1 L12.9 13.3" fill="none" stroke="#0C2C9C" stroke-width="1.3"/></svg><div style="left:40px;top:476px;font-size:12px;line-height:13px;color:#215DC6;white-space:nowrap;letter-spacing:-0.1px;font-weight:bold;">Category Operati...</div><div style="left:12px;top:494px;width:161px;height:214px;background:#D6DFF7;border:1px solid #fff;border-top:none;"></div><svg style="left:17px;top:505px" width="17" height="17" viewBox="0 0 17 17" ><rect x="0.5" y="3.5" width="15" height="12" fill="url(#foldg)" stroke="#7B8FB8"/><rect x="1" y="3" width="14" height="3" fill="#3A86E6"/><path d="M11 0 V7 M7.5 3.5 H15" stroke="#17951A" stroke-width="2"/></svg><div style="left:35px;top:507px;font-size:11px;line-height:13px;color:#215DC6;white-space:nowrap;">New Category</div><svg style="left:17px;top:527px" width="17" height="17" viewBox="0 0 17 17" ><rect x="0.5" y="1.5" width="5" height="3" fill="#fff" stroke="#1D4FB8"/><path d="M3 4.5 V15 M3 8 H7 M3 11.5 H7 M3 15 H7" stroke="#1D4FB8"/><rect x="7.5" y="6.5" width="6" height="3" fill="#fff" stroke="#1D4FB8"/><rect x="7.5" y="10" width="6" height="3" fill="#fff" stroke="#1D4FB8"/><rect x="7.5" y="13.5" width="6" height="3" fill="#fff" stroke="#1D4FB8"/><path d="M14 0 V6 M11 3 H17" stroke="#17951A" stroke-width="2"/></svg><div style="left:35px;top:529px;font-size:11px;line-height:13px;color:#5F88D8;white-space:nowrap;">Add Sub Category</div><svg style="left:17px;top:549px" width="17" height="17" viewBox="0 0 17 17" ><rect x="0.5" y="3.5" width="15" height="12" fill="url(#foldg)" stroke="#7B8FB8"/><rect x="1" y="3" width="14" height="3" fill="#3A86E6"/><path d="M4 14 L13 3 L15.5 5 L6.5 15.5 L3.5 15.5Z" fill="#F2C04A" stroke="#3C4B7A" stroke-width=".8"/><circle cx="14.5" cy="3" r="1.6" fill="#E2453B"/></svg><div style="left:35px;top:551px;font-size:11px;line-height:13px;color:#5F88D8;white-space:nowrap;">Edit Category</div><svg style="left:17px;top:571px" width="17" height="17" viewBox="0 0 17 17" ><rect x="0.5" y="3.5" width="15" height="12" fill="url(#foldg)" stroke="#7B8FB8"/><rect x="1" y="3" width="14" height="3" fill="#3A86E6"/><path d="M9 9 L15.5 16 M15.5 9 L9 16" stroke="#E0301E" stroke-width="1.8"/></svg><div style="left:35px;top:573px;font-size:11px;line-height:13px;color:#5F88D8;white-space:nowrap;">Delete Category</div><svg style="left:17px;top:593px" width="17" height="17" viewBox="0 0 17 17" ><rect x="0.5" y="3.5" width="15" height="12" fill="url(#foldg)" stroke="#7B8FB8"/><rect x="1" y="3" width="14" height="3" fill="#3A86E6"/><path d="M8 7 L11 10 H9.5 V13 H6.5 V10 H5Z" fill="#3A6FD6"/></svg><div style="left:35px;top:595px;font-size:11px;line-height:13px;color:#5F88D8;white-space:nowrap;">Category Move Up</div><svg style="left:17px;top:615px" width="17" height="17" viewBox="0 0 17 17" ><rect x="0.5" y="3.5" width="15" height="12" fill="url(#foldg)" stroke="#7B8FB8"/><rect x="1" y="3" width="14" height="3" fill="#3A86E6"/><path d="M8 14 L11 11 H9.5 V8 H6.5 V11 H5Z" fill="#3A6FD6"/></svg><div style="left:35px;top:617px;font-size:11px;line-height:13px;color:#5F88D8;white-space:nowrap;">Category Move Down</div><svg style="left:17px;top:637px" width="17" height="17" viewBox="0 0 17 17" ><path d="M3 1 L5.5 4.5 H4 V15.5 H2 V4.5 H0.5Z" fill="#3A6FD6" stroke="#1D4FB8" stroke-width=".6"/><path d="M8 2 H10 M8 6 H12 M8 10 H14 M8 14 H16" stroke="#17951A" stroke-width="2"/></svg><div style="left:35px;top:639px;font-size:11px;line-height:13px;color:#5F88D8;white-space:nowrap;">Sort Categories</div><svg style="left:17px;top:659px" width="17" height="17" viewBox="0 0 17 17" ><rect x="0.5" y="3.5" width="15" height="12" fill="url(#foldg)" stroke="#7B8FB8"/><rect x="1" y="3" width="14" height="3" fill="#3A86E6"/><path d="M4 10 L7.5 7 V9 H12 V11 H7.5 V13Z" fill="#3A6FD6"/></svg><div style="left:35px;top:661px;font-size:11px;line-height:13px;color:#5F88D8;white-space:nowrap;">Category Outdent</div><svg style="left:17px;top:681px" width="17" height="17" viewBox="0 0 17 17" ><rect x="0.5" y="3.5" width="15" height="12" fill="url(#foldg)" stroke="#7B8FB8"/><rect x="1" y="3" width="14" height="3" fill="#3A86E6"/><path d="M12 10 L8.5 7 V9 H4 V11 H8.5 V13Z" fill="#3A6FD6"/></svg><div style="left:35px;top:683px;font-size:11px;line-height:13px;color:#5F88D8;white-space:nowrap;">Category Indent</div><div style="left:185px;top:86px;width:910px;height:890px;border:1px solid #7F9DB9;background:#ECE9D8;"></div><div style="left:186px;top:87px;width:891px;height:35px;background:#ACA899;"></div><div style="left:192px;top:95px;width:66px;height:19px;background:linear-gradient(to bottom,#EDEBDD 0px,#EBE9DA 15px,#DCD9C8 16px,#CFCBB8 18px);"></div><div style="left:256px;top:97px;width:1px;height:14px;background:#D0CDBB;box-shadow:1px 0 0 #fff;"></div><div style="left:195px;top:98px;font-size:11px;line-height:13px;color:#000;white-space:nowrap;letter-spacing:-0.2px;">Category</div><svg style="left:244px;top:100px" width="8" height="9" viewBox="0 0 8 9" ><path d="M4 0.5 L7.5 8.5 H0.5Z" fill="none" stroke="#ACA899"/></svg><div style="left:186px;top:122px;width:891px;height:19px;background:linear-gradient(to bottom,#EBE9DA 0px,#EBE9DA 15px,#E4E1D1 15px,#E4E1D1 16px,#D8D4C3 16px,#D8D4C3 17px,#CBC7B4 17px,#CBC7B4 18px,#D3CFBD 18px);"></div><div style="left:233px;top:125px;width:1px;height:12px;background:#CBC7B5;box-shadow:1px 0 0 #fff;"></div><div style="left:299px;top:125px;width:1px;height:12px;background:#CBC7B5;box-shadow:1px 0 0 #fff;"></div><div style="left:695px;top:125px;width:1px;height:12px;background:#CBC7B5;box-shadow:1px 0 0 #fff;"></div><div style="left:758px;top:125px;width:1px;height:12px;background:#CBC7B5;box-shadow:1px 0 0 #fff;"></div><div style="left:868px;top:125px;width:1px;height:12px;background:#CBC7B5;box-shadow:1px 0 0 #fff;"></div><div style="left:935px;top:125px;width:1px;height:12px;background:#CBC7B5;box-shadow:1px 0 0 #fff;"></div><div style="left:985px;top:125px;width:1px;height:12px;background:#CBC7B5;box-shadow:1px 0 0 #fff;"></div><div style="left:1075px;top:125px;width:1px;height:12px;background:#CBC7B5;box-shadow:1px 0 0 #fff;"></div><div style="left:197px;top:125px;font-size:11px;line-height:13px;color:#000;white-space:nowrap;letter-spacing:-0.2px;">Done</div><svg style="left:237px;top:124px" width="17" height="17" viewBox="0 0 17 17" ><path d="M8.5 0.5 L16.5 8.5 L8.5 16.5 L0.5 8.5Z" fill="#fff" stroke="#AFC3EC"/><path d="M8.5 2.5 L14.5 8.5 L8.5 14.5 L2.5 8.5Z" fill="#1D5BD5"/><path d="M8.5 2.5 L14.5 8.5 L8.5 8.5 L2.5 8.5Z" fill="#4F86E6"/><rect x="7.5" y="7" width="2" height="5" fill="#fff"/><rect x="7.5" y="4.5" width="2" height="1.6" fill="#fff"/></svg><div style="left:267px;top:125px;font-size:11px;line-height:13px;color:#000;white-space:nowrap;letter-spacing:-0.2px;">Info</div><div style="left:475px;top:125px;font-size:11px;line-height:13px;color:#000;white-space:nowrap;letter-spacing:-0.2px;">Name</div><div style="left:703px;top:125px;font-size:11px;line-height:13px;color:#000;white-space:nowrap;letter-spacing:-0.35px;">Priority</div><div style="left:776px;top:125px;font-size:11px;line-height:13px;color:#000;white-space:nowrap;letter-spacing:-0.2px;">Due Date&amp;Time</div><div style="left:879px;top:125px;font-size:11px;line-height:13px;color:#000;white-space:nowrap;letter-spacing:-0.2px;">Status</div><div style="left:938px;top:125px;font-size:11px;line-height:13px;color:#000;white-space:nowrap;letter-spacing:-0.3px;">Complete</div><div style="left:1001px;top:125px;font-size:11px;line-height:13px;color:#000;white-space:nowrap;letter-spacing:-0.2px;">Category</div><svg style="left:1063px;top:126px" width="8" height="9" viewBox="0 0 8 9" ><path d="M4 0.5 L7.5 8.5 H0.5Z" fill="none" stroke="#ACA899"/></svg><div style="left:678px;top:125px;width:15px;height:13px;background:#fff;"></div><div style="left:679px;top:126px;width:13px;height:11px;border-radius:2px;background:linear-gradient(135deg,#D5E1FB,#AFC6F4);"></div><svg style="left:678px;top:125px" width="15" height="13" viewBox="0 0 15 13" ><path d="M4 5 L7.5 8.5 L11 5" fill="none" stroke="#4D6185" stroke-width="2"/></svg><div style="left:741px;top:125px;width:15px;height:13px;background:#fff;"></div><div style="left:742px;top:126px;width:13px;height:11px;border-radius:2px;background:linear-gradient(135deg,#D5E1FB,#AFC6F4);"></div><svg style="left:741px;top:125px" width="15" height="13" viewBox="0 0 15 13" ><path d="M4 5 L7.5 8.5 L11 5" fill="none" stroke="#4D6185" stroke-width="2"/></svg><div style="left:918px;top:125px;width:15px;height:13px;background:#fff;"></div><div style="left:919px;top:126px;width:13px;height:11px;border-radius:2px;background:linear-gradient(135deg,#D5E1FB,#AFC6F4);"></div><svg style="left:918px;top:125px" width="15" height="13" viewBox="0 0 15 13" ><path d="M4 5 L7.5 8.5 L11 5" fill="none" stroke="#4D6185" stroke-width="2"/></svg><div style="left:186px;top:141px;width:891px;height:809px;overflow:hidden;"><svg style="left:3px;top:4px" width="9" height="9" viewBox="0 0 9 9" ><rect x="0.5" y="0.5" width="8" height="8" rx="1" fill="#F4F3EE" stroke="#94A8CF"/><path d="M2 4.5 H7" stroke="#000" stroke-width="1"/></svg><div style="left:17px;top:3px;font-size:11px;line-height:13px;color:#000;white-space:nowrap;letter-spacing:-0.2px;">Category : 1. Two months beforehand</div><div style="left:14px;top:17px;width:877px;height:1px;background:#B9B5A4;"></div><div style="left:14px;top:18px;width:876px;height:21px;background:#316AC5;"></div><div style="left:14px;top:18px;width:1px;height:21px;background:#B9B5A4;"></div><div style="left:47px;top:18px;width:1px;height:21px;background:#B9B5A4;"></div><div style="left:113px;top:18px;width:1px;height:21px;background:#B9B5A4;"></div><div style="left:509px;top:18px;width:1px;height:21px;background:#B9B5A4;"></div><div style="left:572px;top:18px;width:1px;height:21px;background:#B9B5A4;"></div><div style="left:682px;top:18px;width:1px;height:21px;background:#B9B5A4;"></div><div style="left:749px;top:18px;width:1px;height:21px;background:#B9B5A4;"></div><div style="left:799px;top:18px;width:1px;height:21px;background:#B9B5A4;"></div><div style="left:890px;top:18px;width:1px;height:21px;background:#B9B5A4;"></div><div style="left:14px;top:39px;width:877px;height:1px;background:#B9B5A4;"></div><svg style="left:24px;top:22px" width="13" height="13" viewBox="0 0 13 13" ><rect x="0.5" y="0.5" width="12" height="12" fill="url(#chkg)" stroke="#1C5180"/></svg><svg style="left:97px;top:20px" width="16" height="16" viewBox="0 0 16 16" ><path d="M0.5 15.5 V9 L1.2 8 V5.5 L2 4.5 L2.5 2.5 L8 10.5 L6.5 15.5Z" fill="#149414"/>
<path d="M1.6 15.5 L2 6.5 L2.8 4 L6.8 9.5 L7.2 15.5Z" fill="#EEF0F4"/>
<path d="M2.5 2.2 L3.8 1 H9 L15.2 7.6 L12.8 10.8 H8Z" fill="#2DB52D" stroke="#0B7D0B" stroke-width="0.9"/>
<path d="M5 6 L10 5.5" stroke="#5FD05F" stroke-width="1.5"/>
<path d="M4 1.2 H9" stroke="#3A3A6A" stroke-width="1.2"/>
<rect x="6" y="11.5" width="6" height="3" fill="#CFE6FA" stroke="#7A8CC8" stroke-width=".6"/></svg><div style="left:116px;top:21px;width:392px;font-size:11px;line-height:13px;color:#FFFFFF;white-space:nowrap;letter-spacing:-0.2px;overflow:hidden;">Book air, train or coach tickets as early as possible.</div><svg style="left:513px;top:20px" width="16" height="16" viewBox="0 0 16 16" ><circle cx="8" cy="8" r="7.5" fill="url(#orng)" stroke="#B8560A" stroke-width=".6"/><circle cx="8" cy="8" r="2.8" fill="#fff"/></svg><div style="left:533px;top:21px;font-size:11px;line-height:13px;color:#FFFFFF;white-space:nowrap;letter-spacing:-0.2px;">Normal</div><div style="left:578px;top:21px;font-size:11px;line-height:13px;color:#FFFFFF;white-space:nowrap;">02.11.2005 18:01:08</div><svg style="left:688px;top:20px" width="13" height="16" viewBox="0 0 13 16" ><path d="M0.5 0.5 H9 L12.5 4 V15.5 H0.5Z" fill="url(#docg)" stroke="#7E8FC6"/><path d="M9 0.5 V4 H12.5Z" fill="#5A9BEB"/></svg><div style="left:706px;top:23px;font-size:11px;line-height:13px;color:#FFFFFF;white-space:nowrap;letter-spacing:-0.2px;">Created</div><div style="left:766px;top:23px;font-size:11px;line-height:13px;color:#FFFFFF;white-space:nowrap;letter-spacing:-0.4px;">0 %</div><svg style="left:803px;top:20px" width="16" height="16" viewBox="0 0 16 16" ><circle cx="3.8" cy="5.8" r="3.9" fill="#F7A848" stroke="#C88A10" stroke-width=".7"/><path d="M0 15.5 V11 Q0 9.5 2 9.5 H6 Q8 9.5 8 11 V15.5Z" fill="#2F6CF0"/><path d="M3 10 L4 14 L5 10Z" fill="#fff"/><path d="M8.5 3 Q10 1 13 1.5 Q16 3 16 6 Q16 10 12.5 10 Q9 10 9 6 Z" fill="#E87820" stroke="#D02010" stroke-width=".6"/><path d="M8.5 9 V3 Q10 1 13 1.5 Q10 3 10 8Z" fill="#111"/><rect x="8.5" y="10" width="7.5" height="4" fill="#30C030"/></svg><div style="left:823px;top:21px;width:64px;font-size:11px;line-height:13px;color:#FFFFFF;white-space:nowrap;letter-spacing:-0.2px;overflow:hidden;">1. Two months beforehand</div><div style="left:14px;top:40px;width:876px;height:18px;background:#316AC5;"></div><div style="left:14px;top:40px;width:1px;height:18px;background:#B9B5A4;"></div><div style="left:890px;top:40px;width:1px;height:18px;background:#B9B5A4;"></div><div style="left:14px;top:58px;width:877px;height:1px;background:#B9B5A4;"></div><div style="left:39px;top:43px;width:850px;font-size:11px;line-height:13px;color:#FFFFFF;white-space:nowrap;letter-spacing:-0.2px;overflow:hidden;">If you're planning to travel home for Christmas, book train or plane tickets now or make sure that your car is up to motorway driving and plan your route.</div><div style="left:15px;top:18px;width:875px;height:40px;border:1px dotted #F0A33A;"></div><div style="left:14px;top:59px;width:876px;height:21px;background:#FFFFFF;"></div><div style="left:14px;top:59px;width:1px;height:21px;background:#B9B5A4;"></div><div style="left:47px;top:59px;width:1px;height:21px;background:#B9B5A4;"></div><div style="left:113px;top:59px;width:1px;height:21px;background:#B9B5A4;"></div><div style="left:509px;top:59px;width:1px;height:21px;background:#B9B5A4;"></div><div style="left:572px;top:59px;width:1px;height:21px;background:#B9B5A4;"></div><div style="left:682px;top:59px;width:1px;height:21px;background:#B9B5A4;"></div><div style="left:749px;top:59px;width:1px;height:21px;background:#B9B5A4;"></div><div style="left:799px;top:59px;width:1px;height:21px;background:#B9B5A4;"></div><div style="left:890px;top:59px;width:1px;height:21px;background:#B9B5A4;"></div><div style="left:14px;top:80px;width:877px;height:1px;background:#B9B5A4;"></div><svg style="left:24px;top:63px" width="13" height="13" viewBox="0 0 13 13" ><rect x="0.5" y="0.5" width="12" height="12" fill="url(#chkg)" stroke="#1C5180"/></svg><div style="left:116px;top:62px;width:392px;font-size:11px;line-height:13px;color:#000000;white-space:nowrap;letter-spacing:-0.2px;overflow:hidden;">Book tickets to see a Christmas musical, ballet, pantomime or show.</div><svg style="left:513px;top:61px" width="16" height="16" viewBox="0 0 16 16" ><circle cx="8" cy="8" r="7.5" fill="url(#orng)" stroke="#B8560A" stroke-width=".6"/><circle cx="8" cy="8" r="2.8" fill="#fff"/></svg><div style="left:533px;top:62px;font-size:11px;line-height:13px;color:#000000;white-space:nowrap;letter-spacing:-0.2px;">Normal</div><svg style="left:688px;top:61px" width="13" height="16" viewBox="0 0 13 16" ><path d="M0.5 0.5 H9 L12.5 4 V15.5 H0.5Z" fill="url(#docg)" stroke="#7E8FC6"/><path d="M9 0.5 V4 H12.5Z" fill="#5A9BEB"/></svg><div style="left:706px;top:64px;font-size:11px;line-height:13px;color:#000000;white-space:nowrap;letter-spacing:-0.2px;">Created</div><div style="left:766px;top:64px;font-size:11px;line-height:13px;color:#000000;white-space:nowrap;letter-spacing:-0.4px;">0 %</div><svg style="left:803px;top:61px" width="16" height="16" viewBox="0 0 16 16" ><circle cx="3.8" cy="5.8" r="3.9" fill="#F7A848" stroke="#C88A10" stroke-width=".7"/><path d="M0 15.5 V11 Q0 9.5 2 9.5 H6 Q8 9.5 8 11 V15.5Z" fill="#2F6CF0"/><path d="M3 10 L4 14 L5 10Z" fill="#fff"/><path d="M8.5 3 Q10 1 13 1.5 Q16 3 16 6 Q16 10 12.5 10 Q9 10 9 6 Z" fill="#E87820" stroke="#D02010" stroke-width=".6"/><path d="M8.5 9 V3 Q10 1 13 1.5 Q10 3 10 8Z" fill="#111"/><rect x="8.5" y="10" width="7.5" height="4" fill="#30C030"/></svg><div style="left:823px;top:62px;width:64px;font-size:11px;line-height:13px;color:#000000;white-space:nowrap;letter-spacing:-0.2px;overflow:hidden;">1. Two months beforehand</div><div style="left:0px;top:80px;width:891px;height:1px;background:#B9B5A4;"></div><svg style="left:3px;top:85px" width="9" height="9" viewBox="0 0 9 9" ><rect x="0.5" y="0.5" width="8" height="8" rx="1" fill="#F4F3EE" stroke="#94A8CF"/><path d="M2 4.5 H7" stroke="#000" stroke-width="1"/></svg><div style="left:17px;top:84px;font-size:11px;line-height:13px;color:#000;white-space:nowrap;letter-spacing:-0.2px;">Category : 2. One to two months beforehand</div><div style="left:14px;top:98px;width:877px;height:1px;background:#B9B5A4;"></div><div style="left:14px;top:99px;width:876px;height:21px;background:#FFFFFF;"></div><div style="left:14px;top:99px;width:1px;height:21px;background:#B9B5A4;"></div><div style="left:47px;top:99px;width:1px;height:21px;background:#B9B5A4;"></div><div style="left:113px;top:99px;width:1px;height:21px;background:#B9B5A4;"></div><div style="left:509px;top:99px;width:1px;height:21px;background:#B9B5A4;"></div><div style="left:572px;top:99px;width:1px;height:21px;background:#B9B5A4;"></div><div style="left:682px;top:99px;width:1px;height:21px;background:#B9B5A4;"></div><div style="left:749px;top:99px;width:1px;height:21px;background:#B9B5A4;"></div><div style="left:799px;top:99px;width:1px;height:21px;background:#B9B5A4;"></div><div style="left:890px;top:99px;width:1px;height:21px;background:#B9B5A4;"></div><div style="left:14px;top:120px;width:877px;height:1px;background:#B9B5A4;"></div><svg style="left:24px;top:103px" width="13" height="13" viewBox="0 0 13 13" ><rect x="0.5" y="0.5" width="12" height="12" fill="url(#chkg)" stroke="#1C5180"/></svg><svg style="left:97px;top:101px" width="16" height="16" viewBox="0 0 16 16" ><path d="M0.5 15.5 V9 L1.2 8 V5.5 L2 4.5 L2.5 2.5 L8 10.5 L6.5 15.5Z" fill="#149414"/>
<path d="M1.6 15.5 L2 6.5 L2.8 4 L6.8 9.5 L7.2 15.5Z" fill="#EEF0F4"/>
<path d="M2.5 2.2 L3.8 1 H9 L15.2 7.6 L12.8 10.8 H8Z" fill="#2DB52D" stroke="#0B7D0B" stroke-width="0.9"/>
<path d="M5 6 L10 5.5" stroke="#5FD05F" stroke-width="1.5"/>
<path d="M4 1.2 H9" stroke="#3A3A6A" stroke-width="1.2"/>
<rect x="6" y="11.5" width="6" height="3" fill="#CFE6FA" stroke="#7A8CC8" stroke-width=".6"/></svg><div style="left:116px;top:102px;width:392px;font-size:11px;line-height:13px;color:#000000;white-space:nowrap;letter-spacing:-0.2px;overflow:hidden;">Check the opening times of your nearest store.</div><svg style="left:513px;top:101px" width="16" height="16" viewBox="0 0 16 16" ><circle cx="8" cy="8" r="7.5" fill="url(#orng)" stroke="#B8560A" stroke-width=".6"/><circle cx="8" cy="8" r="2.8" fill="#fff"/></svg><div style="left:533px;top:102px;font-size:11px;line-height:13px;color:#000000;white-space:nowrap;letter-spacing:-0.2px;">Normal</div><div style="left:578px;top:102px;font-size:11px;line-height:13px;color:#000000;white-space:nowrap;">25.11.2005 18:02:59</div><svg style="left:688px;top:101px" width="13" height="16" viewBox="0 0 13 16" ><path d="M0.5 0.5 H9 L12.5 4 V15.5 H0.5Z" fill="url(#docg)" stroke="#7E8FC6"/><path d="M9 0.5 V4 H12.5Z" fill="#5A9BEB"/></svg><div style="left:706px;top:104px;font-size:11px;line-height:13px;color:#000000;white-space:nowrap;letter-spacing:-0.2px;">Created</div><div style="left:766px;top:104px;font-size:11px;line-height:13px;color:#000000;white-space:nowrap;letter-spacing:-0.4px;">0 %</div><svg style="left:803px;top:101px" width="16" height="16" viewBox="0 0 16 16" ><path d="M0.5 4.5 L3 4.5 L8 5.5 L12.5 2 L15.5 8.5 L14 11 L10.5 13.5 H6.5 L2 11 L1.5 6Z" fill="#EEF4FC" stroke="#E8801A" stroke-width="1"/><path d="M8 6 L10.5 13" stroke="#6FA0E8" stroke-width="1.6"/><path d="M11 6 L13 5 M11.5 8 L13.5 7" stroke="#B8B8A8" stroke-width=".7"/></svg><div style="left:823px;top:102px;width:64px;font-size:11px;line-height:13px;color:#000000;white-space:nowrap;letter-spacing:-0.2px;overflow:hidden;">2. One to two months beforehand</div><div style="left:14px;top:121px;width:876px;height:18px;background:#FFFFFF;"></div><div style="left:14px;top:121px;width:1px;height:18px;background:#B9B5A4;"></div><div style="left:890px;top:121px;width:1px;height:18px;background:#B9B5A4;"></div><div style="left:14px;top:139px;width:877px;height:1px;background:#B9B5A4;"></div><div style="left:39px;top:124px;width:850px;font-size:11px;line-height:13px;color:#0000FF;white-space:nowrap;letter-spacing:-0.2px;overflow:hidden;">Most stores are open late in the lead-up to Christmas - for exact opening times of your local store.</div><div style="left:14px;top:140px;width:876px;height:21px;background:#FFFFFF;"></div><div style="left:14px;top:140px;width:1px;height:21px;background:#B9B5A4;"></div><div style="left:47px;top:140px;width:1px;height:21px;background:#B9B5A4;"></div><div style="left:113px;top:140px;width:1px;height:21px;background:#B9B5A4;"></div><div style="left:509px;top:140px;width:1px;height:21px;background:#B9B5A4;"></div><div style="left:572px;top:140px;width:1px;height:21px;background:#B9B5A4;"></div><div style="left:682px;top:140px;width:1px;height:21px;background:#B9B5A4;"></div><div style="left:749px;top:140px;width:1px;height:21px;background:#B9B5A4;"></div><div style="left:799px;top:140px;width:1px;height:21px;background:#B9B5A4;"></div><div style="left:890px;top:140px;width:1px;height:21px;background:#B9B5A4;"></div><div style="left:14px;top:161px;width:877px;height:1px;background:#B9B5A4;"></div><svg style="left:24px;top:144px" width="13" height="13" viewBox="0 0 13 13" ><rect x="0.5" y="0.5" width="12" height="12" fill="url(#chkg)" stroke="#1C5180"/></svg><svg style="left:97px;top:142px" width="16" height="16" viewBox="0 0 16 16" ><path d="M0.5 15.5 V9 L1.2 8 V5.5 L2 4.5 L2.5 2.5 L8 10.5 L6.5 15.5Z" fill="#149414"/>
<path d="M1.6 15.5 L2 6.5 L2.8 4 L6.8 9.5 L7.2 15.5Z" fill="#EEF0F4"/>
<path d="M2.5 2.2 L3.8 1 H9 L15.2 7.6 L12.8 10.8 H8Z" fill="#2DB52D" stroke="#0B7D0B" stroke-width="0.9"/>
<path d="M5 6 L10 5.5" stroke="#5FD05F" stroke-width="1.5"/>
<path d="M4 1.2 H9" stroke="#3A3A6A" stroke-width="1.2"/>
<rect x="6" y="11.5" width="6" height="3" fill="#CFE6FA" stroke="#7A8CC8" stroke-width=".6"/></svg><div style="left:116px;top:143px;width:392px;font-size:11px;line-height:13px;color:#000000;white-space:nowrap;letter-spacing:-0.2px;overflow:hidden;">Buy presents for work colleagues, friends, family and unexpected guests.</div><svg style="left:513px;top:142px" width="16" height="16" viewBox="0 0 16 16" ><circle cx="8" cy="8" r="7.5" fill="url(#orng)" stroke="#B8560A" stroke-width=".6"/><circle cx="8" cy="8" r="2.8" fill="#fff"/></svg><div style="left:533px;top:143px;font-size:11px;line-height:13px;color:#000000;white-space:nowrap;letter-spacing:-0.2px;">Normal</div><svg style="left:688px;top:142px" width="13" height="16" viewBox="0 0 13 16" ><path d="M0.5 0.5 H9 L12.5 4 V15.5 H0.5Z" fill="url(#docg)" stroke="#7E8FC6"/><path d="M9 0.5 V4 H12.5Z" fill="#5A9BEB"/></svg><div style="left:706px;top:145px;font-size:11px;line-height:13px;color:#000000;white-space:nowrap;letter-spacing:-0.2px;">Created</div><div style="left:766px;top:145px;font-size:11px;line-height:13px;color:#000000;white-space:nowrap;letter-spacing:-0.4px;">0 %</div><svg style="left:803px;top:142px" width="16" height="16" viewBox="0 0 16 16" ><path d="M0.5 4.5 L3 4.5 L8 5.5 L12.5 2 L15.5 8.5 L14 11 L10.5 13.5 H6.5 L2 11 L1.5 6Z" fill="#EEF4FC" stroke="#E8801A" stroke-width="1"/><path d="M8 6 L10.5 13" stroke="#6FA0E8" stroke-width="1.6"/><path d="M11 6 L13 5 M11.5 8 L13.5 7" stroke="#B8B8A8" stroke-width=".7"/></svg><div style="left:823px;top:143px;width:64px;font-size:11px;line-height:13px;color:#000000;white-space:nowrap;letter-spacing:-0.2px;overflow:hidden;">2. One to two months beforehand</div><div style="left:14px;top:162px;width:876px;height:18px;background:#FFFFFF;"></div><div style="left:14px;top:162px;width:1px;height:18px;background:#B9B5A4;"></div><div style="left:890px;top:162px;width:1px;height:18px;background:#B9B5A4;"></div><div style="left:14px;top:180px;width:877px;height:1px;background:#B9B5A4;"></div><div style="left:39px;top:165px;width:850px;font-size:11px;line-height:13px;color:#0000FF;white-space:nowrap;letter-spacing:-0.2px;overflow:hidden;">Be sure to purchase presents early to avoid disappointment. A good idea is to buy a few extra small gifts so you're prepared for those unexpected visitors.</div><div style="left:14px;top:181px;width:876px;height:21px;background:#FFFFFF;"></div><div style="left:14px;top:181px;width:1px;height:21px;background:#B9B5A4;"></div><div style="left:47px;top:181px;width:1px;height:21px;background:#B9B5A4;"></div><div style="left:113px;top:181px;width:1px;height:21px;background:#B9B5A4;"></div><div style="left:509px;top:181px;width:1px;height:21px;background:#B9B5A4;"></div><div style="left:572px;top:181px;width:1px;height:21px;background:#B9B5A4;"></div><div style="left:682px;top:181px;width:1px;height:21px;background:#B9B5A4;"></div><div style="left:749px;top:181px;width:1px;height:21px;background:#B9B5A4;"></div><div style="left:799px;top:181px;width:1px;height:21px;background:#B9B5A4;"></div><div style="left:890px;top:181px;width:1px;height:21px;background:#B9B5A4;"></div><div style="left:14px;top:202px;width:877px;height:1px;background:#B9B5A4;"></div><svg style="left:24px;top:185px" width="13" height="13" viewBox="0 0 13 13" ><rect x="0.5" y="0.5" width="12" height="12" fill="url(#chkg)" stroke="#1C5180"/></svg><div style="left:116px;top:184px;width:392px;font-size:11px;line-height:13px;color:#000000;white-space:nowrap;letter-spacing:-0.2px;overflow:hidden;">Buy favors and decorations for your Christmas table.</div><svg style="left:513px;top:183px" width="16" height="16" viewBox="0 0 16 16" ><circle cx="8" cy="8" r="7.5" fill="url(#orng)" stroke="#B8560A" stroke-width=".6"/><circle cx="8" cy="8" r="2.8" fill="#fff"/></svg><div style="left:533px;top:184px;font-size:11px;line-height:13px;color:#000000;white-space:nowrap;letter-spacing:-0.2px;">Normal</div><svg style="left:688px;top:183px" width="13" height="16" viewBox="0 0 13 16" ><path d="M0.5 0.5 H9 L12.5 4 V15.5 H0.5Z" fill="url(#docg)" stroke="#7E8FC6"/><path d="M9 0.5 V4 H12.5Z" fill="#5A9BEB"/></svg><div style="left:706px;top:186px;font-size:11px;line-height:13px;color:#000000;white-space:nowrap;letter-spacing:-0.2px;">Created</div><div style="left:766px;top:186px;font-size:11px;line-height:13px;color:#000000;white-space:nowrap;letter-spacing:-0.4px;">0 %</div><svg style="left:803px;top:183px" width="16" height="16" viewBox="0 0 16 16" ><path d="M0.5 4.5 L3 4.5 L8 5.5 L12.5 2 L15.5 8.5 L14 11 L10.5 13.5 H6.5 L2 11 L1.5 6Z" fill="#EEF4FC" stroke="#E8801A" stroke-width="1"/><path d="M8 6 L10.5 13" stroke="#6FA0E8" stroke-width="1.6"/><path d="M11 6 L13 5 M11.5 8 L13.5 7" stroke="#B8B8A8" stroke-width=".7"/></svg><div style="left:823px;top:184px;width:64px;font-size:11px;line-height:13px;color:#000000;white-space:nowrap;letter-spacing:-0.2px;overflow:hidden;">2. One to two months beforehand</div><div style="left:0px;top:202px;width:891px;height:1px;background:#B9B5A4;"></div><svg style="left:3px;top:207px" width="9" height="9" viewBox="0 0 9 9" ><rect x="0.5" y="0.5" width="8" height="8" rx="1" fill="#F4F3EE" stroke="#94A8CF"/><path d="M2 4.5 H7" stroke="#000" stroke-width="1"/></svg><div style="left:17px;top:206px;font-size:11px;line-height:13px;color:#000;white-space:nowrap;letter-spacing:-0.2px;">Category : 3. Three weeks beforehand</div><div style="left:14px;top:220px;width:877px;height:1px;background:#B9B5A4;"></div><div style="left:14px;top:221px;width:876px;height:21px;background:#FFFFFF;"></div><div style="left:14px;top:221px;width:1px;height:21px;background:#B9B5A4;"></div><div style="left:47px;top:221px;width:1px;height:21px;background:#B9B5A4;"></div><div style="left:113px;top:221px;width:1px;height:21px;background:#B9B5A4;"></div><div style="left:509px;top:221px;width:1px;height:21px;background:#B9B5A4;"></div><div style="left:572px;top:221px;width:1px;height:21px;background:#B9B5A4;"></div><div style="left:682px;top:221px;width:1px;height:21px;background:#B9B5A4;"></div><div style="left:749px;top:221px;width:1px;height:21px;background:#B9B5A4;"></div><div style="left:799px;top:221px;width:1px;height:21px;background:#B9B5A4;"></div><div style="left:890px;top:221px;width:1px;height:21px;background:#B9B5A4;"></div><div style="left:14px;top:242px;width:877px;height:1px;background:#B9B5A4;"></div><svg style="left:24px;top:225px" width="13" height="13" viewBox="0 0 13 13" ><rect x="0.5" y="0.5" width="12" height="12" fill="url(#chkg)" stroke="#1C5180"/></svg><svg style="left:97px;top:223px" width="16" height="16" viewBox="0 0 16 16" ><path d="M0.5 15.5 V9 L1.2 8 V5.5 L2 4.5 L2.5 2.5 L8 10.5 L6.5 15.5Z" fill="#149414"/>
<path d="M1.6 15.5 L2 6.5 L2.8 4 L6.8 9.5 L7.2 15.5Z" fill="#EEF0F4"/>
<path d="M2.5 2.2 L3.8 1 H9 L15.2 7.6 L12.8 10.8 H8Z" fill="#2DB52D" stroke="#0B7D0B" stroke-width="0.9"/>
<path d="M5 6 L10 5.5" stroke="#5FD05F" stroke-width="1.5"/>
<path d="M4 1.2 H9" stroke="#3A3A6A" stroke-width="1.2"/>
<rect x="6" y="11.5" width="6" height="3" fill="#CFE6FA" stroke="#7A8CC8" stroke-width=".6"/></svg><div style="left:116px;top:224px;width:392px;font-size:11px;line-height:13px;color:#000000;white-space:nowrap;letter-spacing:-0.2px;overflow:hidden;">Send out your Christmas cards and presents.</div><svg style="left:513px;top:223px" width="16" height="16" viewBox="0 0 16 16" ><circle cx="8" cy="8" r="7.5" fill="url(#orng)" stroke="#B8560A" stroke-width=".6"/><circle cx="8" cy="8" r="2.8" fill="#fff"/></svg><div style="left:533px;top:224px;font-size:11px;line-height:13px;color:#000000;white-space:nowrap;letter-spacing:-0.2px;">Normal</div><div style="left:578px;top:224px;font-size:11px;line-height:13px;color:#000000;white-space:nowrap;">01.12.2005 18:03:46</div><svg style="left:688px;top:223px" width="13" height="16" viewBox="0 0 13 16" ><path d="M0.5 0.5 H9 L12.5 4 V15.5 H0.5Z" fill="url(#docg)" stroke="#7E8FC6"/><path d="M9 0.5 V4 H12.5Z" fill="#5A9BEB"/></svg><div style="left:706px;top:226px;font-size:11px;line-height:13px;color:#000000;white-space:nowrap;letter-spacing:-0.2px;">Created</div><div style="left:766px;top:226px;font-size:11px;line-height:13px;color:#000000;white-space:nowrap;letter-spacing:-0.4px;">0 %</div><svg style="left:803px;top:223px" width="16" height="16" viewBox="0 0 16 16" ><rect x="4.5" y="2.5" width="10" height="12" fill="#FAFAFA" stroke="#9A9A88"/><rect x="1.5" y="2.5" width="3" height="13" rx="1" fill="#D8281A"/><path d="M2 4 H4 M2 6 H4" stroke="#8EB4F0" stroke-width=".6"/><path d="M6 1 Q7 0.5 8 2 M10 1 Q11 0.5 12 2" stroke="#223" stroke-width="1.2" fill="none"/><circle cx="9" cy="3" r=".9" fill="#D22"/><circle cx="13" cy="3" r=".9" fill="#D22"/><path d="M7 5.5 H12" stroke="#C8C4B0" stroke-width="1"/><path d="M11.5 8 H9 L8.7 10 Q11.5 9.5 11.5 11.3 Q11 13 8.5 12.5" stroke="#223260" stroke-width="1.3" fill="none"/></svg><div style="left:823px;top:224px;width:64px;font-size:11px;line-height:13px;color:#000000;white-space:nowrap;letter-spacing:-0.2px;overflow:hidden;">3. Three weeks beforehand</div><div style="left:14px;top:243px;width:876px;height:18px;background:#FFFFFF;"></div><div style="left:14px;top:243px;width:1px;height:18px;background:#B9B5A4;"></div><div style="left:890px;top:243px;width:1px;height:18px;background:#B9B5A4;"></div><div style="left:14px;top:261px;width:877px;height:1px;background:#B9B5A4;"></div><div style="left:39px;top:246px;width:850px;font-size:11px;line-height:13px;color:#0000FF;white-space:nowrap;letter-spacing:-0.2px;overflow:hidden;">The last posting date for parcels depends on weight, so allow at least four more days.</div><div style="left:14px;top:262px;width:876px;height:21px;background:#FFFFFF;"></div><div style="left:14px;top:262px;width:1px;height:21px;background:#B9B5A4;"></div><div style="left:47px;top:262px;width:1px;height:21px;background:#B9B5A4;"></div><div style="left:113px;top:262px;width:1px;height:21px;background:#B9B5A4;"></div><div style="left:509px;top:262px;width:1px;height:21px;background:#B9B5A4;"></div><div style="left:572px;top:262px;width:1px;height:21px;background:#B9B5A4;"></div><div style="left:682px;top:262px;width:1px;height:21px;background:#B9B5A4;"></div><div style="left:749px;top:262px;width:1px;height:21px;background:#B9B5A4;"></div><div style="left:799px;top:262px;width:1px;height:21px;background:#B9B5A4;"></div><div style="left:890px;top:262px;width:1px;height:21px;background:#B9B5A4;"></div><div style="left:14px;top:283px;width:877px;height:1px;background:#B9B5A4;"></div><svg style="left:24px;top:266px" width="13" height="13" viewBox="0 0 13 13" ><rect x="0.5" y="0.5" width="12" height="12" fill="url(#chkg)" stroke="#1C5180"/></svg><svg style="left:97px;top:264px" width="16" height="16" viewBox="0 0 16 16" ><path d="M0.5 15.5 V9 L1.2 8 V5.5 L2 4.5 L2.5 2.5 L8 10.5 L6.5 15.5Z" fill="#149414"/>
<path d="M1.6 15.5 L2 6.5 L2.8 4 L6.8 9.5 L7.2 15.5Z" fill="#EEF0F4"/>
<path d="M2.5 2.2 L3.8 1 H9 L15.2 7.6 L12.8 10.8 H8Z" fill="#2DB52D" stroke="#0B7D0B" stroke-width="0.9"/>
<path d="M5 6 L10 5.5" stroke="#5FD05F" stroke-width="1.5"/>
<path d="M4 1.2 H9" stroke="#3A3A6A" stroke-width="1.2"/>
<rect x="6" y="11.5" width="6" height="3" fill="#CFE6FA" stroke="#7A8CC8" stroke-width=".6"/></svg><div style="left:116px;top:265px;width:392px;font-size:11px;line-height:13px;color:#000000;white-space:nowrap;letter-spacing:-0.2px;overflow:hidden;">Buy, decorate and put up your Christmas tree.</div><svg style="left:513px;top:264px" width="16" height="16" viewBox="0 0 16 16" ><circle cx="8" cy="8" r="7.5" fill="url(#orng)" stroke="#B8560A" stroke-width=".6"/><circle cx="8" cy="8" r="2.8" fill="#fff"/></svg><div style="left:533px;top:265px;font-size:11px;line-height:13px;color:#000000;white-space:nowrap;letter-spacing:-0.2px;">Normal</div><svg style="left:688px;top:264px" width="13" height="16" viewBox="0 0 13 16" ><path d="M0.5 0.5 H9 L12.5 4 V15.5 H0.5Z" fill="url(#docg)" stroke="#7E8FC6"/><path d="M9 0.5 V4 H12.5Z" fill="#5A9BEB"/></svg><div style="left:706px;top:267px;font-size:11px;line-height:13px;color:#000000;white-space:nowrap;letter-spacing:-0.2px;">Created</div><div style="left:766px;top:267px;font-size:11px;line-height:13px;color:#000000;white-space:nowrap;letter-spacing:-0.4px;">0 %</div><svg style="left:803px;top:264px" width="16" height="16" viewBox="0 0 16 16" ><rect x="4.5" y="2.5" width="10" height="12" fill="#FAFAFA" stroke="#9A9A88"/><rect x="1.5" y="2.5" width="3" height="13" rx="1" fill="#D8281A"/><path d="M2 4 H4 M2 6 H4" stroke="#8EB4F0" stroke-width=".6"/><path d="M6 1 Q7 0.5 8 2 M10 1 Q11 0.5 12 2" stroke="#223" stroke-width="1.2" fill="none"/><circle cx="9" cy="3" r=".9" fill="#D22"/><circle cx="13" cy="3" r=".9" fill="#D22"/><path d="M7 5.5 H12" stroke="#C8C4B0" stroke-width="1"/><path d="M11.5 8 H9 L8.7 10 Q11.5 9.5 11.5 11.3 Q11 13 8.5 12.5" stroke="#223260" stroke-width="1.3" fill="none"/></svg><div style="left:823px;top:265px;width:64px;font-size:11px;line-height:13px;color:#000000;white-space:nowrap;letter-spacing:-0.2px;overflow:hidden;">3. Three weeks beforehand</div><div style="left:14px;top:284px;width:876px;height:18px;background:#FFFFFF;"></div><div style="left:14px;top:284px;width:1px;height:18px;background:#B9B5A4;"></div><div style="left:890px;top:284px;width:1px;height:18px;background:#B9B5A4;"></div><div style="left:14px;top:302px;width:877px;height:1px;background:#B9B5A4;"></div><div style="left:39px;top:287px;width:850px;font-size:11px;line-height:13px;color:#0000FF;white-space:nowrap;letter-spacing:-0.2px;overflow:hidden;">Remember the tree can go up anytime before Christmas Eve, but you should take it down on 6 January.</div><div style="left:14px;top:303px;width:876px;height:21px;background:#FFFFFF;"></div><div style="left:14px;top:303px;width:1px;height:21px;background:#B9B5A4;"></div><div style="left:47px;top:303px;width:1px;height:21px;background:#B9B5A4;"></div><div style="left:113px;top:303px;width:1px;height:21px;background:#B9B5A4;"></div><div style="left:509px;top:303px;width:1px;height:21px;background:#B9B5A4;"></div><div style="left:572px;top:303px;width:1px;height:21px;background:#B9B5A4;"></div><div style="left:682px;top:303px;width:1px;height:21px;background:#B9B5A4;"></div><div style="left:749px;top:303px;width:1px;height:21px;background:#B9B5A4;"></div><div style="left:799px;top:303px;width:1px;height:21px;background:#B9B5A4;"></div><div style="left:890px;top:303px;width:1px;height:21px;background:#B9B5A4;"></div><div style="left:14px;top:324px;width:877px;height:1px;background:#B9B5A4;"></div><svg style="left:24px;top:307px" width="13" height="13" viewBox="0 0 13 13" ><rect x="0.5" y="0.5" width="12" height="12" fill="url(#chkg)" stroke="#1C5180"/></svg><div style="left:116px;top:306px;width:392px;font-size:11px;line-height:13px;color:#000000;white-space:nowrap;letter-spacing:-0.2px;overflow:hidden;">Decorate your house.</div><svg style="left:513px;top:305px" width="16" height="16" viewBox="0 0 16 16" ><circle cx="8" cy="8" r="7.5" fill="url(#orng)" stroke="#B8560A" stroke-width=".6"/><circle cx="8" cy="8" r="2.8" fill="#fff"/></svg><div style="left:533px;top:306px;font-size:11px;line-height:13px;color:#000000;white-space:nowrap;letter-spacing:-0.2px;">Normal</div><svg style="left:688px;top:305px" width="13" height="16" viewBox="0 0 13 16" ><path d="M0.5 0.5 H9 L12.5 4 V15.5 H0.5Z" fill="url(#docg)" stroke="#7E8FC6"/><path d="M9 0.5 V4 H12.5Z" fill="#5A9BEB"/></svg><div style="left:706px;top:308px;font-size:11px;line-height:13px;color:#000000;white-space:nowrap;letter-spacing:-0.2px;">Created</div><div style="left:766px;top:308px;font-size:11px;line-height:13px;color:#000000;white-space:nowrap;letter-spacing:-0.4px;">0 %</div><svg style="left:803px;top:305px" width="16" height="16" viewBox="0 0 16 16" ><rect x="4.5" y="2.5" width="10" height="12" fill="#FAFAFA" stroke="#9A9A88"/><rect x="1.5" y="2.5" width="3" height="13" rx="1" fill="#D8281A"/><path d="M2 4 H4 M2 6 H4" stroke="#8EB4F0" stroke-width=".6"/><path d="M6 1 Q7 0.5 8 2 M10 1 Q11 0.5 12 2" stroke="#223" stroke-width="1.2" fill="none"/><circle cx="9" cy="3" r=".9" fill="#D22"/><circle cx="13" cy="3" r=".9" fill="#D22"/><path d="M7 5.5 H12" stroke="#C8C4B0" stroke-width="1"/><path d="M11.5 8 H9 L8.7 10 Q11.5 9.5 11.5 11.3 Q11 13 8.5 12.5" stroke="#223260" stroke-width="1.3" fill="none"/></svg><div style="left:823px;top:306px;width:64px;font-size:11px;line-height:13px;color:#000000;white-space:nowrap;letter-spacing:-0.2px;overflow:hidden;">3. Three weeks beforehand</div><div style="left:14px;top:325px;width:876px;height:21px;background:#FFFFFF;"></div><div style="left:14px;top:325px;width:1px;height:21px;background:#B9B5A4;"></div><div style="left:47px;top:325px;width:1px;height:21px;background:#B9B5A4;"></div><div style="left:113px;top:325px;width:1px;height:21px;background:#B9B5A4;"></div><div style="left:509px;top:325px;width:1px;height:21px;background:#B9B5A4;"></div><div style="left:572px;top:325px;width:1px;height:21px;background:#B9B5A4;"></div><div style="left:682px;top:325px;width:1px;height:21px;background:#B9B5A4;"></div><div style="left:749px;top:325px;width:1px;height:21px;background:#B9B5A4;"></div><div style="left:799px;top:325px;width:1px;height:21px;background:#B9B5A4;"></div><div style="left:890px;top:325px;width:1px;height:21px;background:#B9B5A4;"></div><div style="left:14px;top:346px;width:877px;height:1px;background:#B9B5A4;"></div><svg style="left:24px;top:329px" width="13" height="13" viewBox="0 0 13 13" ><rect x="0.5" y="0.5" width="12" height="12" fill="url(#chkg)" stroke="#1C5180"/></svg><svg style="left:97px;top:327px" width="16" height="16" viewBox="0 0 16 16" ><path d="M0.5 15.5 V9 L1.2 8 V5.5 L2 4.5 L2.5 2.5 L8 10.5 L6.5 15.5Z" fill="#149414"/>
<path d="M1.6 15.5 L2 6.5 L2.8 4 L6.8 9.5 L7.2 15.5Z" fill="#EEF0F4"/>
<path d="M2.5 2.2 L3.8 1 H9 L15.2 7.6 L12.8 10.8 H8Z" fill="#2DB52D" stroke="#0B7D0B" stroke-width="0.9"/>
<path d="M5 6 L10 5.5" stroke="#5FD05F" stroke-width="1.5"/>
<path d="M4 1.2 H9" stroke="#3A3A6A" stroke-width="1.2"/>
<rect x="6" y="11.5" width="6" height="3" fill="#CFE6FA" stroke="#7A8CC8" stroke-width=".6"/></svg><div style="left:116px;top:328px;width:392px;font-size:11px;line-height:13px;color:#000000;white-space:nowrap;letter-spacing:-0.2px;overflow:hidden;">Plan your food and drink shopping list.</div><svg style="left:513px;top:327px" width="16" height="16" viewBox="0 0 16 16" ><circle cx="8" cy="8" r="7.5" fill="url(#orng)" stroke="#B8560A" stroke-width=".6"/><circle cx="8" cy="8" r="2.8" fill="#fff"/></svg><div style="left:533px;top:328px;font-size:11px;line-height:13px;color:#000000;white-space:nowrap;letter-spacing:-0.2px;">Normal</div><svg style="left:688px;top:327px" width="13" height="16" viewBox="0 0 13 16" ><path d="M0.5 0.5 H9 L12.5 4 V15.5 H0.5Z" fill="url(#docg)" stroke="#7E8FC6"/><path d="M9 0.5 V4 H12.5Z" fill="#5A9BEB"/></svg><div style="left:706px;top:330px;font-size:11px;line-height:13px;color:#000000;white-space:nowrap;letter-spacing:-0.2px;">Created</div><div style="left:766px;top:330px;font-size:11px;line-height:13px;color:#000000;white-space:nowrap;letter-spacing:-0.4px;">0 %</div><svg style="left:803px;top:327px" width="16" height="16" viewBox="0 0 16 16" ><rect x="4.5" y="2.5" width="10" height="12" fill="#FAFAFA" stroke="#9A9A88"/><rect x="1.5" y="2.5" width="3" height="13" rx="1" fill="#D8281A"/><path d="M2 4 H4 M2 6 H4" stroke="#8EB4F0" stroke-width=".6"/><path d="M6 1 Q7 0.5 8 2 M10 1 Q11 0.5 12 2" stroke="#223" stroke-width="1.2" fill="none"/><circle cx="9" cy="3" r=".9" fill="#D22"/><circle cx="13" cy="3" r=".9" fill="#D22"/><path d="M7 5.5 H12" stroke="#C8C4B0" stroke-width="1"/><path d="M11.5 8 H9 L8.7 10 Q11.5 9.5 11.5 11.3 Q11 13 8.5 12.5" stroke="#223260" stroke-width="1.3" fill="none"/></svg><div style="left:823px;top:328px;width:64px;font-size:11px;line-height:13px;color:#000000;white-space:nowrap;letter-spacing:-0.2px;overflow:hidden;">3. Three weeks beforehand</div><div style="left:14px;top:347px;width:876px;height:18px;background:#FFFFFF;"></div><div style="left:14px;top:347px;width:1px;height:18px;background:#B9B5A4;"></div><div style="left:890px;top:347px;width:1px;height:18px;background:#B9B5A4;"></div><div style="left:14px;top:365px;width:877px;height:1px;background:#B9B5A4;"></div><div style="left:39px;top:350px;width:850px;font-size:11px;line-height:13px;color:#0000FF;white-space:nowrap;letter-spacing:-0.2px;overflow:hidden;">By this time you should know how many guests you are expecting for Christmas lunch or any other celebrations you're holding so you can plan accordingly.</div><div style="left:14px;top:366px;width:876px;height:21px;background:#FFFFFF;"></div><div style="left:14px;top:366px;width:1px;height:21px;background:#B9B5A4;"></div><div style="left:47px;top:366px;width:1px;height:21px;background:#B9B5A4;"></div><div style="left:113px;top:366px;width:1px;height:21px;background:#B9B5A4;"></div><div style="left:509px;top:366px;width:1px;height:21px;background:#B9B5A4;"></div><div style="left:572px;top:366px;width:1px;height:21px;background:#B9B5A4;"></div><div style="left:682px;top:366px;width:1px;height:21px;background:#B9B5A4;"></div><div style="left:749px;top:366px;width:1px;height:21px;background:#B9B5A4;"></div><div style="left:799px;top:366px;width:1px;height:21px;background:#B9B5A4;"></div><div style="left:890px;top:366px;width:1px;height:21px;background:#B9B5A4;"></div><div style="left:14px;top:387px;width:877px;height:1px;background:#B9B5A4;"></div><svg style="left:24px;top:370px" width="13" height="13" viewBox="0 0 13 13" ><rect x="0.5" y="0.5" width="12" height="12" fill="url(#chkg)" stroke="#1C5180"/></svg><svg style="left:97px;top:368px" width="16" height="16" viewBox="0 0 16 16" ><path d="M0.5 15.5 V9 L1.2 8 V5.5 L2 4.5 L2.5 2.5 L8 10.5 L6.5 15.5Z" fill="#149414"/>
<path d="M1.6 15.5 L2 6.5 L2.8 4 L6.8 9.5 L7.2 15.5Z" fill="#EEF0F4"/>
<path d="M2.5 2.2 L3.8 1 H9 L15.2 7.6 L12.8 10.8 H8Z" fill="#2DB52D" stroke="#0B7D0B" stroke-width="0.9"/>
<path d="M5 6 L10 5.5" stroke="#5FD05F" stroke-width="1.5"/>
<path d="M4 1.2 H9" stroke="#3A3A6A" stroke-width="1.2"/>
<rect x="6" y="11.5" width="6" height="3" fill="#CFE6FA" stroke="#7A8CC8" stroke-width=".6"/></svg><div style="left:116px;top:369px;width:392px;font-size:11px;line-height:13px;color:#000000;white-space:nowrap;letter-spacing:-0.2px;overflow:hidden;">Clear out your fridge and cupboards</div><svg style="left:513px;top:368px" width="16" height="16" viewBox="0 0 16 16" ><circle cx="8" cy="8" r="7.5" fill="url(#orng)" stroke="#B8560A" stroke-width=".6"/><circle cx="8" cy="8" r="2.8" fill="#fff"/></svg><div style="left:533px;top:369px;font-size:11px;line-height:13px;color:#000000;white-space:nowrap;letter-spacing:-0.2px;">Normal</div><svg style="left:688px;top:368px" width="13" height="16" viewBox="0 0 13 16" ><path d="M0.5 0.5 H9 L12.5 4 V15.5 H0.5Z" fill="url(#docg)" stroke="#7E8FC6"/><path d="M9 0.5 V4 H12.5Z" fill="#5A9BEB"/></svg><div style="left:706px;top:371px;font-size:11px;line-height:13px;color:#000000;white-space:nowrap;letter-spacing:-0.2px;">Created</div><div style="left:766px;top:371px;font-size:11px;line-height:13px;color:#000000;white-space:nowrap;letter-spacing:-0.4px;">0 %</div><svg style="left:803px;top:368px" width="16" height="16" viewBox="0 0 16 16" ><rect x="4.5" y="2.5" width="10" height="12" fill="#FAFAFA" stroke="#9A9A88"/><rect x="1.5" y="2.5" width="3" height="13" rx="1" fill="#D8281A"/><path d="M2 4 H4 M2 6 H4" stroke="#8EB4F0" stroke-width=".6"/><path d="M6 1 Q7 0.5 8 2 M10 1 Q11 0.5 12 2" stroke="#223" stroke-width="1.2" fill="none"/><circle cx="9" cy="3" r=".9" fill="#D22"/><circle cx="13" cy="3" r=".9" fill="#D22"/><path d="M7 5.5 H12" stroke="#C8C4B0" stroke-width="1"/><path d="M11.5 8 H9 L8.7 10 Q11.5 9.5 11.5 11.3 Q11 13 8.5 12.5" stroke="#223260" stroke-width="1.3" fill="none"/></svg><div style="left:823px;top:369px;width:64px;font-size:11px;line-height:13px;color:#000000;white-space:nowrap;letter-spacing:-0.2px;overflow:hidden;">3. Three weeks beforehand</div><div style="left:14px;top:388px;width:876px;height:18px;background:#FFFFFF;"></div><div style="left:14px;top:388px;width:1px;height:18px;background:#B9B5A4;"></div><div style="left:890px;top:388px;width:1px;height:18px;background:#B9B5A4;"></div><div style="left:14px;top:406px;width:877px;height:1px;background:#B9B5A4;"></div><div style="left:39px;top:391px;width:850px;font-size:11px;line-height:13px;color:#0000FF;white-space:nowrap;letter-spacing:-0.2px;overflow:hidden;">so that you can begin to buy and store your Christmas goodies - start now by buying your non perishable goods.</div><div style="left:0px;top:406px;width:891px;height:1px;background:#B9B5A4;"></div><svg style="left:3px;top:411px" width="9" height="9" viewBox="0 0 9 9" ><rect x="0.5" y="0.5" width="8" height="8" rx="1" fill="#F4F3EE" stroke="#94A8CF"/><path d="M2 4.5 H7" stroke="#000" stroke-width="1"/></svg><div style="left:17px;top:410px;font-size:11px;line-height:13px;color:#000;white-space:nowrap;letter-spacing:-0.2px;">Category : 4. Two weeks beforehand</div><div style="left:14px;top:424px;width:877px;height:1px;background:#B9B5A4;"></div><div style="left:14px;top:425px;width:876px;height:21px;background:#FFFFFF;"></div><div style="left:14px;top:425px;width:1px;height:21px;background:#B9B5A4;"></div><div style="left:47px;top:425px;width:1px;height:21px;background:#B9B5A4;"></div><div style="left:113px;top:425px;width:1px;height:21px;background:#B9B5A4;"></div><div style="left:509px;top:425px;width:1px;height:21px;background:#B9B5A4;"></div><div style="left:572px;top:425px;width:1px;height:21px;background:#B9B5A4;"></div><div style="left:682px;top:425px;width:1px;height:21px;background:#B9B5A4;"></div><div style="left:749px;top:425px;width:1px;height:21px;background:#B9B5A4;"></div><div style="left:799px;top:425px;width:1px;height:21px;background:#B9B5A4;"></div><div style="left:890px;top:425px;width:1px;height:21px;background:#B9B5A4;"></div><div style="left:14px;top:446px;width:877px;height:1px;background:#B9B5A4;"></div><svg style="left:24px;top:429px" width="13" height="13" viewBox="0 0 13 13" ><rect x="0.5" y="0.5" width="12" height="12" fill="url(#chkg)" stroke="#1C5180"/></svg><div style="left:116px;top:428px;width:392px;font-size:11px;line-height:13px;color:#000000;white-space:nowrap;letter-spacing:-0.2px;overflow:hidden;">Check that you have enough cutlery and crockery.</div><svg style="left:513px;top:427px" width="16" height="16" viewBox="0 0 16 16" ><circle cx="8" cy="8" r="7.5" fill="url(#orng)" stroke="#B8560A" stroke-width=".6"/><circle cx="8" cy="8" r="2.8" fill="#fff"/></svg><div style="left:533px;top:428px;font-size:11px;line-height:13px;color:#000000;white-space:nowrap;letter-spacing:-0.2px;">Normal</div><div style="left:578px;top:428px;font-size:11px;line-height:13px;color:#000000;white-space:nowrap;">10.12.2005 18:06:36</div><svg style="left:688px;top:427px" width="13" height="16" viewBox="0 0 13 16" ><path d="M0.5 0.5 H9 L12.5 4 V15.5 H0.5Z" fill="url(#docg)" stroke="#7E8FC6"/><path d="M9 0.5 V4 H12.5Z" fill="#5A9BEB"/></svg><div style="left:706px;top:430px;font-size:11px;line-height:13px;color:#000000;white-space:nowrap;letter-spacing:-0.2px;">Created</div><div style="left:766px;top:430px;font-size:11px;line-height:13px;color:#000000;white-space:nowrap;letter-spacing:-0.4px;">0 %</div><svg style="left:803px;top:427px" width="16" height="16" viewBox="0 0 16 16" ><path d="M0.5 8 Q0.5 4 5 3.5 Q8 2.5 10 4 Q15.5 4.5 15.5 8 Q15 11.5 11 11.5 Q8 12.5 5 11.5 Q0.5 11 0.5 8Z" fill="#F2A540" stroke="#B57A10" stroke-width=".9"/><rect x="2" y="6" width="3" height="2" fill="#E02010"/><rect x="5" y="4" width="3" height="2" fill="#28B028"/><rect x="3.5" y="9" width="3" height="2" fill="#5060D8"/><path d="M8 7 L10 8.5 L8.5 10" stroke="#F8E010" stroke-width="2" fill="none"/><rect x="11" y="6.5" width="3.5" height="2.5" fill="#2080F0"/></svg><div style="left:823px;top:428px;width:64px;font-size:11px;line-height:13px;color:#000000;white-space:nowrap;letter-spacing:-0.2px;overflow:hidden;">4. Two weeks beforehand</div><div style="left:14px;top:447px;width:876px;height:21px;background:#FFFFFF;"></div><div style="left:14px;top:447px;width:1px;height:21px;background:#B9B5A4;"></div><div style="left:47px;top:447px;width:1px;height:21px;background:#B9B5A4;"></div><div style="left:113px;top:447px;width:1px;height:21px;background:#B9B5A4;"></div><div style="left:509px;top:447px;width:1px;height:21px;background:#B9B5A4;"></div><div style="left:572px;top:447px;width:1px;height:21px;background:#B9B5A4;"></div><div style="left:682px;top:447px;width:1px;height:21px;background:#B9B5A4;"></div><div style="left:749px;top:447px;width:1px;height:21px;background:#B9B5A4;"></div><div style="left:799px;top:447px;width:1px;height:21px;background:#B9B5A4;"></div><div style="left:890px;top:447px;width:1px;height:21px;background:#B9B5A4;"></div><div style="left:14px;top:468px;width:877px;height:1px;background:#B9B5A4;"></div><svg style="left:24px;top:451px" width="13" height="13" viewBox="0 0 13 13" ><rect x="0.5" y="0.5" width="12" height="12" fill="url(#chkg)" stroke="#1C5180"/></svg><div style="left:116px;top:450px;width:392px;font-size:11px;line-height:13px;color:#000000;white-space:nowrap;letter-spacing:-0.2px;overflow:hidden;">Buy Christmas party outfits if you haven't done so already!</div><svg style="left:513px;top:449px" width="16" height="16" viewBox="0 0 16 16" ><circle cx="8" cy="8" r="7.5" fill="url(#orng)" stroke="#B8560A" stroke-width=".6"/><circle cx="8" cy="8" r="2.8" fill="#fff"/></svg><div style="left:533px;top:450px;font-size:11px;line-height:13px;color:#000000;white-space:nowrap;letter-spacing:-0.2px;">Normal</div><svg style="left:688px;top:449px" width="13" height="16" viewBox="0 0 13 16" ><path d="M0.5 0.5 H9 L12.5 4 V15.5 H0.5Z" fill="url(#docg)" stroke="#7E8FC6"/><path d="M9 0.5 V4 H12.5Z" fill="#5A9BEB"/></svg><div style="left:706px;top:452px;font-size:11px;line-height:13px;color:#000000;white-space:nowrap;letter-spacing:-0.2px;">Created</div><div style="left:766px;top:452px;font-size:11px;line-height:13px;color:#000000;white-space:nowrap;letter-spacing:-0.4px;">0 %</div><svg style="left:803px;top:449px" width="16" height="16" viewBox="0 0 16 16" ><path d="M0.5 8 Q0.5 4 5 3.5 Q8 2.5 10 4 Q15.5 4.5 15.5 8 Q15 11.5 11 11.5 Q8 12.5 5 11.5 Q0.5 11 0.5 8Z" fill="#F2A540" stroke="#B57A10" stroke-width=".9"/><rect x="2" y="6" width="3" height="2" fill="#E02010"/><rect x="5" y="4" width="3" height="2" fill="#28B028"/><rect x="3.5" y="9" width="3" height="2" fill="#5060D8"/><path d="M8 7 L10 8.5 L8.5 10" stroke="#F8E010" stroke-width="2" fill="none"/><rect x="11" y="6.5" width="3.5" height="2.5" fill="#2080F0"/></svg><div style="left:823px;top:450px;width:64px;font-size:11px;line-height:13px;color:#000000;white-space:nowrap;letter-spacing:-0.2px;overflow:hidden;">4. Two weeks beforehand</div><div style="left:14px;top:469px;width:876px;height:21px;background:#FFFFFF;"></div><div style="left:14px;top:469px;width:1px;height:21px;background:#B9B5A4;"></div><div style="left:47px;top:469px;width:1px;height:21px;background:#B9B5A4;"></div><div style="left:113px;top:469px;width:1px;height:21px;background:#B9B5A4;"></div><div style="left:509px;top:469px;width:1px;height:21px;background:#B9B5A4;"></div><div style="left:572px;top:469px;width:1px;height:21px;background:#B9B5A4;"></div><div style="left:682px;top:469px;width:1px;height:21px;background:#B9B5A4;"></div><div style="left:749px;top:469px;width:1px;height:21px;background:#B9B5A4;"></div><div style="left:799px;top:469px;width:1px;height:21px;background:#B9B5A4;"></div><div style="left:890px;top:469px;width:1px;height:21px;background:#B9B5A4;"></div><div style="left:14px;top:490px;width:877px;height:1px;background:#B9B5A4;"></div><svg style="left:24px;top:473px" width="13" height="13" viewBox="0 0 13 13" ><rect x="0.5" y="0.5" width="12" height="12" fill="url(#chkg)" stroke="#1C5180"/></svg><svg style="left:97px;top:471px" width="16" height="16" viewBox="0 0 16 16" ><path d="M0.5 15.5 V9 L1.2 8 V5.5 L2 4.5 L2.5 2.5 L8 10.5 L6.5 15.5Z" fill="#149414"/>
<path d="M1.6 15.5 L2 6.5 L2.8 4 L6.8 9.5 L7.2 15.5Z" fill="#EEF0F4"/>
<path d="M2.5 2.2 L3.8 1 H9 L15.2 7.6 L12.8 10.8 H8Z" fill="#2DB52D" stroke="#0B7D0B" stroke-width="0.9"/>
<path d="M5 6 L10 5.5" stroke="#5FD05F" stroke-width="1.5"/>
<path d="M4 1.2 H9" stroke="#3A3A6A" stroke-width="1.2"/>
<rect x="6" y="11.5" width="6" height="3" fill="#CFE6FA" stroke="#7A8CC8" stroke-width=".6"/></svg><div style="left:116px;top:472px;width:392px;font-size:11px;line-height:13px;color:#000000;white-space:nowrap;letter-spacing:-0.2px;overflow:hidden;">Write out emergency contact numbers</div><svg style="left:513px;top:471px" width="16" height="16" viewBox="0 0 16 16" ><circle cx="8" cy="8" r="7.5" fill="url(#orng)" stroke="#B8560A" stroke-width=".6"/><circle cx="8" cy="8" r="2.8" fill="#fff"/></svg><div style="left:533px;top:472px;font-size:11px;line-height:13px;color:#000000;white-space:nowrap;letter-spacing:-0.2px;">Normal</div><svg style="left:688px;top:471px" width="13" height="16" viewBox="0 0 13 16" ><path d="M0.5 0.5 H9 L12.5 4 V15.5 H0.5Z" fill="url(#docg)" stroke="#7E8FC6"/><path d="M9 0.5 V4 H12.5Z" fill="#5A9BEB"/></svg><div style="left:706px;top:474px;font-size:11px;line-height:13px;color:#000000;white-space:nowrap;letter-spacing:-0.2px;">Created</div><div style="left:766px;top:474px;font-size:11px;line-height:13px;color:#000000;white-space:nowrap;letter-spacing:-0.4px;">0 %</div><svg style="left:803px;top:471px" width="16" height="16" viewBox="0 0 16 16" ><path d="M0.5 8 Q0.5 4 5 3.5 Q8 2.5 10 4 Q15.5 4.5 15.5 8 Q15 11.5 11 11.5 Q8 12.5 5 11.5 Q0.5 11 0.5 8Z" fill="#F2A540" stroke="#B57A10" stroke-width=".9"/><rect x="2" y="6" width="3" height="2" fill="#E02010"/><rect x="5" y="4" width="3" height="2" fill="#28B028"/><rect x="3.5" y="9" width="3" height="2" fill="#5060D8"/><path d="M8 7 L10 8.5 L8.5 10" stroke="#F8E010" stroke-width="2" fill="none"/><rect x="11" y="6.5" width="3.5" height="2.5" fill="#2080F0"/></svg><div style="left:823px;top:472px;width:64px;font-size:11px;line-height:13px;color:#000000;white-space:nowrap;letter-spacing:-0.2px;overflow:hidden;">4. Two weeks beforehand</div><div style="left:14px;top:491px;width:876px;height:18px;background:#FFFFFF;"></div><div style="left:14px;top:491px;width:1px;height:18px;background:#B9B5A4;"></div><div style="left:890px;top:491px;width:1px;height:18px;background:#B9B5A4;"></div><div style="left:14px;top:509px;width:877px;height:1px;background:#B9B5A4;"></div><div style="left:39px;top:494px;width:850px;font-size:11px;line-height:13px;color:#0000FF;white-space:nowrap;letter-spacing:-0.2px;overflow:hidden;">that you might need during the Christmas period such as chemist, doctor, electricity and gas suppliers, emergency plumber and neighbors.</div><div style="left:0px;top:509px;width:891px;height:1px;background:#B9B5A4;"></div><svg style="left:3px;top:514px" width="9" height="9" viewBox="0 0 9 9" ><rect x="0.5" y="0.5" width="8" height="8" rx="1" fill="#F4F3EE" stroke="#94A8CF"/><path d="M2 4.5 H7" stroke="#000" stroke-width="1"/></svg><div style="left:17px;top:513px;font-size:11px;line-height:13px;color:#000;white-space:nowrap;letter-spacing:-0.2px;">Category : 5. One week beforehand</div><div style="left:14px;top:527px;width:877px;height:1px;background:#B9B5A4;"></div><div style="left:14px;top:528px;width:876px;height:21px;background:#FFFFFF;"></div><div style="left:14px;top:528px;width:1px;height:21px;background:#B9B5A4;"></div><div style="left:47px;top:528px;width:1px;height:21px;background:#B9B5A4;"></div><div style="left:113px;top:528px;width:1px;height:21px;background:#B9B5A4;"></div><div style="left:509px;top:528px;width:1px;height:21px;background:#B9B5A4;"></div><div style="left:572px;top:528px;width:1px;height:21px;background:#B9B5A4;"></div><div style="left:682px;top:528px;width:1px;height:21px;background:#B9B5A4;"></div><div style="left:749px;top:528px;width:1px;height:21px;background:#B9B5A4;"></div><div style="left:799px;top:528px;width:1px;height:21px;background:#B9B5A4;"></div><div style="left:890px;top:528px;width:1px;height:21px;background:#B9B5A4;"></div><div style="left:14px;top:549px;width:877px;height:1px;background:#B9B5A4;"></div><svg style="left:24px;top:532px" width="13" height="13" viewBox="0 0 13 13" ><rect x="0.5" y="0.5" width="12" height="12" fill="url(#chkg)" stroke="#1C5180"/></svg><div style="left:116px;top:531px;width:392px;font-size:11px;line-height:13px;color:#000000;white-space:nowrap;letter-spacing:-0.2px;overflow:hidden;">Buy last minute drinks and perishable foods.</div><svg style="left:513px;top:530px" width="16" height="16" viewBox="0 0 16 16" ><circle cx="8" cy="8" r="7.5" fill="url(#orng)" stroke="#B8560A" stroke-width=".6"/><circle cx="8" cy="8" r="2.8" fill="#fff"/></svg><div style="left:533px;top:531px;font-size:11px;line-height:13px;color:#000000;white-space:nowrap;letter-spacing:-0.2px;">Normal</div><div style="left:578px;top:531px;font-size:11px;line-height:13px;color:#000000;white-space:nowrap;">17.12.2005 18:08:21</div><svg style="left:688px;top:530px" width="13" height="16" viewBox="0 0 13 16" ><path d="M0.5 0.5 H9 L12.5 4 V15.5 H0.5Z" fill="url(#docg)" stroke="#7E8FC6"/><path d="M9 0.5 V4 H12.5Z" fill="#5A9BEB"/></svg><div style="left:706px;top:533px;font-size:11px;line-height:13px;color:#000000;white-space:nowrap;letter-spacing:-0.2px;">Created</div><div style="left:766px;top:533px;font-size:11px;line-height:13px;color:#000000;white-space:nowrap;letter-spacing:-0.4px;">0 %</div><svg style="left:803px;top:530px" width="16" height="16" viewBox="0 0 16 16" ><path d="M2 1 V16" stroke="#3A4470" stroke-width="1.8"/><path d="M3 2.5 L9 1.5 V10 L3 11Z" fill="#6474D8" stroke="#2F3A90" stroke-width=".7"/><path d="M9 2.5 L15 1.5 V10 L9 11Z" fill="#7E8CE4" stroke="#2F3A90" stroke-width=".7"/></svg><div style="left:823px;top:531px;width:64px;font-size:11px;line-height:13px;color:#000000;white-space:nowrap;letter-spacing:-0.2px;overflow:hidden;">5. One week beforehand</div><div style="left:14px;top:550px;width:876px;height:21px;background:#FFFFFF;"></div><div style="left:14px;top:550px;width:1px;height:21px;background:#B9B5A4;"></div><div style="left:47px;top:550px;width:1px;height:21px;background:#B9B5A4;"></div><div style="left:113px;top:550px;width:1px;height:21px;background:#B9B5A4;"></div><div style="left:509px;top:550px;width:1px;height:21px;background:#B9B5A4;"></div><div style="left:572px;top:550px;width:1px;height:21px;background:#B9B5A4;"></div><div style="left:682px;top:550px;width:1px;height:21px;background:#B9B5A4;"></div><div style="left:749px;top:550px;width:1px;height:21px;background:#B9B5A4;"></div><div style="left:799px;top:550px;width:1px;height:21px;background:#B9B5A4;"></div><div style="left:890px;top:550px;width:1px;height:21px;background:#B9B5A4;"></div><div style="left:14px;top:571px;width:877px;height:1px;background:#B9B5A4;"></div><svg style="left:24px;top:554px" width="13" height="13" viewBox="0 0 13 13" ><rect x="0.5" y="0.5" width="12" height="12" fill="url(#chkg)" stroke="#1C5180"/></svg><div style="left:116px;top:553px;width:392px;font-size:11px;line-height:13px;color:#000000;white-space:nowrap;letter-spacing:-0.2px;overflow:hidden;">Write out a time plan for Christmas lunch so that you won't be in a panic on the day.</div><svg style="left:513px;top:552px" width="16" height="16" viewBox="0 0 16 16" ><circle cx="8" cy="8" r="7.5" fill="url(#orng)" stroke="#B8560A" stroke-width=".6"/><circle cx="8" cy="8" r="2.8" fill="#fff"/></svg><div style="left:533px;top:553px;font-size:11px;line-height:13px;color:#000000;white-space:nowrap;letter-spacing:-0.2px;">Normal</div><svg style="left:688px;top:552px" width="13" height="16" viewBox="0 0 13 16" ><path d="M0.5 0.5 H9 L12.5 4 V15.5 H0.5Z" fill="url(#docg)" stroke="#7E8FC6"/><path d="M9 0.5 V4 H12.5Z" fill="#5A9BEB"/></svg><div style="left:706px;top:555px;font-size:11px;line-height:13px;color:#000000;white-space:nowrap;letter-spacing:-0.2px;">Created</div><div style="left:766px;top:555px;font-size:11px;line-height:13px;color:#000000;white-space:nowrap;letter-spacing:-0.4px;">0 %</div><svg style="left:803px;top:552px" width="16" height="16" viewBox="0 0 16 16" ><path d="M2 1 V16" stroke="#3A4470" stroke-width="1.8"/><path d="M3 2.5 L9 1.5 V10 L3 11Z" fill="#6474D8" stroke="#2F3A90" stroke-width=".7"/><path d="M9 2.5 L15 1.5 V10 L9 11Z" fill="#7E8CE4" stroke="#2F3A90" stroke-width=".7"/></svg><div style="left:823px;top:553px;width:64px;font-size:11px;line-height:13px;color:#000000;white-space:nowrap;letter-spacing:-0.2px;overflow:hidden;">5. One week beforehand</div><div style="left:14px;top:572px;width:876px;height:21px;background:#FFFFFF;"></div><div style="left:14px;top:572px;width:1px;height:21px;background:#B9B5A4;"></div><div style="left:47px;top:572px;width:1px;height:21px;background:#B9B5A4;"></div><div style="left:113px;top:572px;width:1px;height:21px;background:#B9B5A4;"></div><div style="left:509px;top:572px;width:1px;height:21px;background:#B9B5A4;"></div><div style="left:572px;top:572px;width:1px;height:21px;background:#B9B5A4;"></div><div style="left:682px;top:572px;width:1px;height:21px;background:#B9B5A4;"></div><div style="left:749px;top:572px;width:1px;height:21px;background:#B9B5A4;"></div><div style="left:799px;top:572px;width:1px;height:21px;background:#B9B5A4;"></div><div style="left:890px;top:572px;width:1px;height:21px;background:#B9B5A4;"></div><div style="left:14px;top:593px;width:877px;height:1px;background:#B9B5A4;"></div><svg style="left:24px;top:576px" width="13" height="13" viewBox="0 0 13 13" ><rect x="0.5" y="0.5" width="12" height="12" fill="url(#chkg)" stroke="#1C5180"/></svg><div style="left:116px;top:575px;width:392px;font-size:11px;line-height:13px;color:#000000;white-space:nowrap;letter-spacing:-0.2px;overflow:hidden;">Buy blank videos to record Christmas TV shows and films.</div><svg style="left:513px;top:574px" width="16" height="16" viewBox="0 0 16 16" ><circle cx="8" cy="8" r="7.5" fill="url(#orng)" stroke="#B8560A" stroke-width=".6"/><circle cx="8" cy="8" r="2.8" fill="#fff"/></svg><div style="left:533px;top:575px;font-size:11px;line-height:13px;color:#000000;white-space:nowrap;letter-spacing:-0.2px;">Normal</div><svg style="left:688px;top:574px" width="13" height="16" viewBox="0 0 13 16" ><path d="M0.5 0.5 H9 L12.5 4 V15.5 H0.5Z" fill="url(#docg)" stroke="#7E8FC6"/><path d="M9 0.5 V4 H12.5Z" fill="#5A9BEB"/></svg><div style="left:706px;top:577px;font-size:11px;line-height:13px;color:#000000;white-space:nowrap;letter-spacing:-0.2px;">Created</div><div style="left:766px;top:577px;font-size:11px;line-height:13px;color:#000000;white-space:nowrap;letter-spacing:-0.4px;">0 %</div><svg style="left:803px;top:574px" width="16" height="16" viewBox="0 0 16 16" ><path d="M2 1 V16" stroke="#3A4470" stroke-width="1.8"/><path d="M3 2.5 L9 1.5 V10 L3 11Z" fill="#6474D8" stroke="#2F3A90" stroke-width=".7"/><path d="M9 2.5 L15 1.5 V10 L9 11Z" fill="#7E8CE4" stroke="#2F3A90" stroke-width=".7"/></svg><div style="left:823px;top:575px;width:64px;font-size:11px;line-height:13px;color:#000000;white-space:nowrap;letter-spacing:-0.2px;overflow:hidden;">5. One week beforehand</div><div style="left:14px;top:594px;width:876px;height:21px;background:#FFFFFF;"></div><div style="left:14px;top:594px;width:1px;height:21px;background:#B9B5A4;"></div><div style="left:47px;top:594px;width:1px;height:21px;background:#B9B5A4;"></div><div style="left:113px;top:594px;width:1px;height:21px;background:#B9B5A4;"></div><div style="left:509px;top:594px;width:1px;height:21px;background:#B9B5A4;"></div><div style="left:572px;top:594px;width:1px;height:21px;background:#B9B5A4;"></div><div style="left:682px;top:594px;width:1px;height:21px;background:#B9B5A4;"></div><div style="left:749px;top:594px;width:1px;height:21px;background:#B9B5A4;"></div><div style="left:799px;top:594px;width:1px;height:21px;background:#B9B5A4;"></div><div style="left:890px;top:594px;width:1px;height:21px;background:#B9B5A4;"></div><div style="left:14px;top:615px;width:877px;height:1px;background:#B9B5A4;"></div><svg style="left:24px;top:598px" width="13" height="13" viewBox="0 0 13 13" ><rect x="0.5" y="0.5" width="12" height="12" fill="url(#chkg)" stroke="#1C5180"/></svg><div style="left:116px;top:597px;width:392px;font-size:11px;line-height:13px;color:#000000;white-space:nowrap;letter-spacing:-0.2px;overflow:hidden;">Make sure your camcorder and camera are in working order and filled with batteries</div><svg style="left:513px;top:596px" width="16" height="16" viewBox="0 0 16 16" ><circle cx="8" cy="8" r="7.5" fill="url(#orng)" stroke="#B8560A" stroke-width=".6"/><circle cx="8" cy="8" r="2.8" fill="#fff"/></svg><div style="left:533px;top:597px;font-size:11px;line-height:13px;color:#000000;white-space:nowrap;letter-spacing:-0.2px;">Normal</div><svg style="left:688px;top:596px" width="13" height="16" viewBox="0 0 13 16" ><path d="M0.5 0.5 H9 L12.5 4 V15.5 H0.5Z" fill="url(#docg)" stroke="#7E8FC6"/><path d="M9 0.5 V4 H12.5Z" fill="#5A9BEB"/></svg><div style="left:706px;top:599px;font-size:11px;line-height:13px;color:#000000;white-space:nowrap;letter-spacing:-0.2px;">Created</div><div style="left:766px;top:599px;font-size:11px;line-height:13px;color:#000000;white-space:nowrap;letter-spacing:-0.4px;">0 %</div><svg style="left:803px;top:596px" width="16" height="16" viewBox="0 0 16 16" ><path d="M2 1 V16" stroke="#3A4470" stroke-width="1.8"/><path d="M3 2.5 L9 1.5 V10 L3 11Z" fill="#6474D8" stroke="#2F3A90" stroke-width=".7"/><path d="M9 2.5 L15 1.5 V10 L9 11Z" fill="#7E8CE4" stroke="#2F3A90" stroke-width=".7"/></svg><div style="left:823px;top:597px;width:64px;font-size:11px;line-height:13px;color:#000000;white-space:nowrap;letter-spacing:-0.2px;overflow:hidden;">5. One week beforehand</div><div style="left:14px;top:616px;width:876px;height:21px;background:#FFFFFF;"></div><div style="left:14px;top:616px;width:1px;height:21px;background:#B9B5A4;"></div><div style="left:47px;top:616px;width:1px;height:21px;background:#B9B5A4;"></div><div style="left:113px;top:616px;width:1px;height:21px;background:#B9B5A4;"></div><div style="left:509px;top:616px;width:1px;height:21px;background:#B9B5A4;"></div><div style="left:572px;top:616px;width:1px;height:21px;background:#B9B5A4;"></div><div style="left:682px;top:616px;width:1px;height:21px;background:#B9B5A4;"></div><div style="left:749px;top:616px;width:1px;height:21px;background:#B9B5A4;"></div><div style="left:799px;top:616px;width:1px;height:21px;background:#B9B5A4;"></div><div style="left:890px;top:616px;width:1px;height:21px;background:#B9B5A4;"></div><div style="left:14px;top:637px;width:877px;height:1px;background:#B9B5A4;"></div><svg style="left:24px;top:620px" width="13" height="13" viewBox="0 0 13 13" ><rect x="0.5" y="0.5" width="12" height="12" fill="url(#chkg)" stroke="#1C5180"/></svg><div style="left:116px;top:619px;width:392px;font-size:11px;line-height:13px;color:#000000;white-space:nowrap;letter-spacing:-0.2px;overflow:hidden;">Buy flowers and plants for your home.</div><svg style="left:513px;top:618px" width="16" height="16" viewBox="0 0 16 16" ><circle cx="8" cy="8" r="7.5" fill="url(#orng)" stroke="#B8560A" stroke-width=".6"/><circle cx="8" cy="8" r="2.8" fill="#fff"/></svg><div style="left:533px;top:619px;font-size:11px;line-height:13px;color:#000000;white-space:nowrap;letter-spacing:-0.2px;">Normal</div><svg style="left:688px;top:618px" width="13" height="16" viewBox="0 0 13 16" ><path d="M0.5 0.5 H9 L12.5 4 V15.5 H0.5Z" fill="url(#docg)" stroke="#7E8FC6"/><path d="M9 0.5 V4 H12.5Z" fill="#5A9BEB"/></svg><div style="left:706px;top:621px;font-size:11px;line-height:13px;color:#000000;white-space:nowrap;letter-spacing:-0.2px;">Created</div><div style="left:766px;top:621px;font-size:11px;line-height:13px;color:#000000;white-space:nowrap;letter-spacing:-0.4px;">0 %</div><svg style="left:803px;top:618px" width="16" height="16" viewBox="0 0 16 16" ><path d="M2 1 V16" stroke="#3A4470" stroke-width="1.8"/><path d="M3 2.5 L9 1.5 V10 L3 11Z" fill="#6474D8" stroke="#2F3A90" stroke-width=".7"/><path d="M9 2.5 L15 1.5 V10 L9 11Z" fill="#7E8CE4" stroke="#2F3A90" stroke-width=".7"/></svg><div style="left:823px;top:619px;width:64px;font-size:11px;line-height:13px;color:#000000;white-space:nowrap;letter-spacing:-0.2px;overflow:hidden;">5. One week beforehand</div><div style="left:14px;top:638px;width:876px;height:21px;background:#FFFFFF;"></div><div style="left:14px;top:638px;width:1px;height:21px;background:#B9B5A4;"></div><div style="left:47px;top:638px;width:1px;height:21px;background:#B9B5A4;"></div><div style="left:113px;top:638px;width:1px;height:21px;background:#B9B5A4;"></div><div style="left:509px;top:638px;width:1px;height:21px;background:#B9B5A4;"></div><div style="left:572px;top:638px;width:1px;height:21px;background:#B9B5A4;"></div><div style="left:682px;top:638px;width:1px;height:21px;background:#B9B5A4;"></div><div style="left:749px;top:638px;width:1px;height:21px;background:#B9B5A4;"></div><div style="left:799px;top:638px;width:1px;height:21px;background:#B9B5A4;"></div><div style="left:890px;top:638px;width:1px;height:21px;background:#B9B5A4;"></div><div style="left:14px;top:659px;width:877px;height:1px;background:#B9B5A4;"></div><svg style="left:24px;top:642px" width="13" height="13" viewBox="0 0 13 13" ><rect x="0.5" y="0.5" width="12" height="12" fill="url(#chkg)" stroke="#1C5180"/></svg><div style="left:116px;top:641px;width:392px;font-size:11px;line-height:13px;color:#000000;white-space:nowrap;letter-spacing:-0.2px;overflow:hidden;">Check that you have enough glasses, cutlery and crockery for every occasion.</div><svg style="left:513px;top:640px" width="16" height="16" viewBox="0 0 16 16" ><circle cx="8" cy="8" r="7.5" fill="url(#orng)" stroke="#B8560A" stroke-width=".6"/><circle cx="8" cy="8" r="2.8" fill="#fff"/></svg><div style="left:533px;top:641px;font-size:11px;line-height:13px;color:#000000;white-space:nowrap;letter-spacing:-0.2px;">Normal</div><svg style="left:688px;top:640px" width="13" height="16" viewBox="0 0 13 16" ><path d="M0.5 0.5 H9 L12.5 4 V15.5 H0.5Z" fill="url(#docg)" stroke="#7E8FC6"/><path d="M9 0.5 V4 H12.5Z" fill="#5A9BEB"/></svg><div style="left:706px;top:643px;font-size:11px;line-height:13px;color:#000000;white-space:nowrap;letter-spacing:-0.2px;">Created</div><div style="left:766px;top:643px;font-size:11px;line-height:13px;color:#000000;white-space:nowrap;letter-spacing:-0.4px;">0 %</div><svg style="left:803px;top:640px" width="16" height="16" viewBox="0 0 16 16" ><path d="M2 1 V16" stroke="#3A4470" stroke-width="1.8"/><path d="M3 2.5 L9 1.5 V10 L3 11Z" fill="#6474D8" stroke="#2F3A90" stroke-width=".7"/><path d="M9 2.5 L15 1.5 V10 L9 11Z" fill="#7E8CE4" stroke="#2F3A90" stroke-width=".7"/></svg><div style="left:823px;top:641px;width:64px;font-size:11px;line-height:13px;color:#000000;white-space:nowrap;letter-spacing:-0.2px;overflow:hidden;">5. One week beforehand</div><div style="left:14px;top:660px;width:876px;height:21px;background:#FFFFFF;"></div><div style="left:14px;top:660px;width:1px;height:21px;background:#B9B5A4;"></div><div style="left:47px;top:660px;width:1px;height:21px;background:#B9B5A4;"></div><div style="left:113px;top:660px;width:1px;height:21px;background:#B9B5A4;"></div><div style="left:509px;top:660px;width:1px;height:21px;background:#B9B5A4;"></div><div style="left:572px;top:660px;width:1px;height:21px;background:#B9B5A4;"></div><div style="left:682px;top:660px;width:1px;height:21px;background:#B9B5A4;"></div><div style="left:749px;top:660px;width:1px;height:21px;background:#B9B5A4;"></div><div style="left:799px;top:660px;width:1px;height:21px;background:#B9B5A4;"></div><div style="left:890px;top:660px;width:1px;height:21px;background:#B9B5A4;"></div><div style="left:14px;top:681px;width:877px;height:1px;background:#B9B5A4;"></div><svg style="left:24px;top:664px" width="13" height="13" viewBox="0 0 13 13" ><rect x="0.5" y="0.5" width="12" height="12" fill="url(#chkg)" stroke="#1C5180"/></svg><svg style="left:97px;top:662px" width="16" height="16" viewBox="0 0 16 16" ><path d="M0.5 15.5 V9 L1.2 8 V5.5 L2 4.5 L2.5 2.5 L8 10.5 L6.5 15.5Z" fill="#149414"/>
<path d="M1.6 15.5 L2 6.5 L2.8 4 L6.8 9.5 L7.2 15.5Z" fill="#EEF0F4"/>
<path d="M2.5 2.2 L3.8 1 H9 L15.2 7.6 L12.8 10.8 H8Z" fill="#2DB52D" stroke="#0B7D0B" stroke-width="0.9"/>
<path d="M5 6 L10 5.5" stroke="#5FD05F" stroke-width="1.5"/>
<path d="M4 1.2 H9" stroke="#3A3A6A" stroke-width="1.2"/>
<rect x="6" y="11.5" width="6" height="3" fill="#CFE6FA" stroke="#7A8CC8" stroke-width=".6"/></svg><div style="left:116px;top:663px;width:392px;font-size:11px;line-height:13px;color:#000000;white-space:nowrap;letter-spacing:-0.2px;overflow:hidden;">Do something to help others.</div><svg style="left:513px;top:662px" width="16" height="16" viewBox="0 0 16 16" ><circle cx="8" cy="8" r="7.5" fill="url(#orng)" stroke="#B8560A" stroke-width=".6"/><circle cx="8" cy="8" r="2.8" fill="#fff"/></svg><div style="left:533px;top:663px;font-size:11px;line-height:13px;color:#000000;white-space:nowrap;letter-spacing:-0.2px;">Normal</div><svg style="left:688px;top:662px" width="13" height="16" viewBox="0 0 13 16" ><path d="M0.5 0.5 H9 L12.5 4 V15.5 H0.5Z" fill="url(#docg)" stroke="#7E8FC6"/><path d="M9 0.5 V4 H12.5Z" fill="#5A9BEB"/></svg><div style="left:706px;top:665px;font-size:11px;line-height:13px;color:#000000;white-space:nowrap;letter-spacing:-0.2px;">Created</div><div style="left:766px;top:665px;font-size:11px;line-height:13px;color:#000000;white-space:nowrap;letter-spacing:-0.4px;">0 %</div><svg style="left:803px;top:662px" width="16" height="16" viewBox="0 0 16 16" ><path d="M2 1 V16" stroke="#3A4470" stroke-width="1.8"/><path d="M3 2.5 L9 1.5 V10 L3 11Z" fill="#6474D8" stroke="#2F3A90" stroke-width=".7"/><path d="M9 2.5 L15 1.5 V10 L9 11Z" fill="#7E8CE4" stroke="#2F3A90" stroke-width=".7"/></svg><div style="left:823px;top:663px;width:64px;font-size:11px;line-height:13px;color:#000000;white-space:nowrap;letter-spacing:-0.2px;overflow:hidden;">5. One week beforehand</div><div style="left:14px;top:682px;width:876px;height:18px;background:#FFFFFF;"></div><div style="left:14px;top:682px;width:1px;height:18px;background:#B9B5A4;"></div><div style="left:890px;top:682px;width:1px;height:18px;background:#B9B5A4;"></div><div style="left:14px;top:700px;width:877px;height:1px;background:#B9B5A4;"></div><div style="left:39px;top:685px;width:850px;font-size:11px;line-height:13px;color:#0000FF;white-space:nowrap;letter-spacing:-0.2px;overflow:hidden;">Visit elderly neighbors, donate gifts to local hospitals and charity shops, or make a donation through Children's Promise.</div><div style="left:0px;top:700px;width:891px;height:1px;background:#B9B5A4;"></div><svg style="left:3px;top:705px" width="9" height="9" viewBox="0 0 9 9" ><rect x="0.5" y="0.5" width="8" height="8" rx="1" fill="#F4F3EE" stroke="#94A8CF"/><path d="M2 4.5 H7" stroke="#000" stroke-width="1"/></svg><div style="left:17px;top:704px;font-size:11px;line-height:13px;color:#000;white-space:nowrap;letter-spacing:-0.2px;">Category : 6. Christmas Eve</div><div style="left:14px;top:718px;width:877px;height:1px;background:#B9B5A4;"></div><div style="left:14px;top:719px;width:876px;height:21px;background:#FFFFFF;"></div><div style="left:14px;top:719px;width:1px;height:21px;background:#B9B5A4;"></div><div style="left:47px;top:719px;width:1px;height:21px;background:#B9B5A4;"></div><div style="left:113px;top:719px;width:1px;height:21px;background:#B9B5A4;"></div><div style="left:509px;top:719px;width:1px;height:21px;background:#B9B5A4;"></div><div style="left:572px;top:719px;width:1px;height:21px;background:#B9B5A4;"></div><div style="left:682px;top:719px;width:1px;height:21px;background:#B9B5A4;"></div><div style="left:749px;top:719px;width:1px;height:21px;background:#B9B5A4;"></div><div style="left:799px;top:719px;width:1px;height:21px;background:#B9B5A4;"></div><div style="left:890px;top:719px;width:1px;height:21px;background:#B9B5A4;"></div><div style="left:14px;top:740px;width:877px;height:1px;background:#B9B5A4;"></div><svg style="left:24px;top:723px" width="13" height="13" viewBox="0 0 13 13" ><rect x="0.5" y="0.5" width="12" height="12" fill="url(#chkg)" stroke="#1C5180"/></svg><div style="left:116px;top:722px;width:392px;font-size:11px;line-height:13px;color:#000000;white-space:nowrap;letter-spacing:-0.2px;overflow:hidden;">Make sure you've got a pan big enough to hold the turkey.</div><svg style="left:513px;top:721px" width="16" height="16" viewBox="0 0 16 16" ><circle cx="8" cy="8" r="7.5" fill="url(#orng)" stroke="#B8560A" stroke-width=".6"/><circle cx="8" cy="8" r="2.8" fill="#fff"/></svg><div style="left:533px;top:722px;font-size:11px;line-height:13px;color:#000000;white-space:nowrap;letter-spacing:-0.2px;">Normal</div><div style="left:578px;top:722px;font-size:11px;line-height:13px;color:#000000;white-space:nowrap;">24.12.2005 18:10:47</div><svg style="left:688px;top:721px" width="13" height="16" viewBox="0 0 13 16" ><path d="M0.5 0.5 H9 L12.5 4 V15.5 H0.5Z" fill="url(#docg)" stroke="#7E8FC6"/><path d="M9 0.5 V4 H12.5Z" fill="#5A9BEB"/></svg><div style="left:706px;top:724px;font-size:11px;line-height:13px;color:#000000;white-space:nowrap;letter-spacing:-0.2px;">Created</div><div style="left:766px;top:724px;font-size:11px;line-height:13px;color:#000000;white-space:nowrap;letter-spacing:-0.4px;">0 %</div><svg style="left:803px;top:721px" width="16" height="16" viewBox="0 0 16 16" ><path d="M7 3.5 L8.5 2 H14.5 L15.5 3 V9.5 L14 11 H9 L7 9.5Z" fill="#F8E880" stroke="#B08800" stroke-width="1.1"/><path d="M10 4.5 H13.5 V8Z" fill="#B08800"/><path d="M8.5 10 L1.5 15.5" stroke="#B08800" stroke-width="3.2" stroke-linecap="round"/><path d="M8.5 10 L1.5 15.5" stroke="#FCEA60" stroke-width="1.4" stroke-linecap="round"/></svg><div style="left:823px;top:722px;width:64px;font-size:11px;line-height:13px;color:#000000;white-space:nowrap;letter-spacing:-0.2px;overflow:hidden;">6. Christmas Eve</div><div style="left:14px;top:741px;width:876px;height:21px;background:#FFFFFF;"></div><div style="left:14px;top:741px;width:1px;height:21px;background:#B9B5A4;"></div><div style="left:47px;top:741px;width:1px;height:21px;background:#B9B5A4;"></div><div style="left:113px;top:741px;width:1px;height:21px;background:#B9B5A4;"></div><div style="left:509px;top:741px;width:1px;height:21px;background:#B9B5A4;"></div><div style="left:572px;top:741px;width:1px;height:21px;background:#B9B5A4;"></div><div style="left:682px;top:741px;width:1px;height:21px;background:#B9B5A4;"></div><div style="left:749px;top:741px;width:1px;height:21px;background:#B9B5A4;"></div><div style="left:799px;top:741px;width:1px;height:21px;background:#B9B5A4;"></div><div style="left:890px;top:741px;width:1px;height:21px;background:#B9B5A4;"></div><div style="left:14px;top:762px;width:877px;height:1px;background:#B9B5A4;"></div><svg style="left:24px;top:745px" width="13" height="13" viewBox="0 0 13 13" ><rect x="0.5" y="0.5" width="12" height="12" fill="url(#chkg)" stroke="#1C5180"/></svg><div style="left:116px;top:744px;width:392px;font-size:11px;line-height:13px;color:#000000;white-space:nowrap;letter-spacing:-0.2px;overflow:hidden;">Make sure you can get the turkey into the oven - have you got enough foil to cover</div><svg style="left:513px;top:743px" width="16" height="16" viewBox="0 0 16 16" ><circle cx="8" cy="8" r="7.5" fill="url(#orng)" stroke="#B8560A" stroke-width=".6"/><circle cx="8" cy="8" r="2.8" fill="#fff"/></svg><div style="left:533px;top:744px;font-size:11px;line-height:13px;color:#000000;white-space:nowrap;letter-spacing:-0.2px;">Normal</div><svg style="left:688px;top:743px" width="13" height="16" viewBox="0 0 13 16" ><path d="M0.5 0.5 H9 L12.5 4 V15.5 H0.5Z" fill="url(#docg)" stroke="#7E8FC6"/><path d="M9 0.5 V4 H12.5Z" fill="#5A9BEB"/></svg><div style="left:706px;top:746px;font-size:11px;line-height:13px;color:#000000;white-space:nowrap;letter-spacing:-0.2px;">Created</div><div style="left:766px;top:746px;font-size:11px;line-height:13px;color:#000000;white-space:nowrap;letter-spacing:-0.4px;">0 %</div><svg style="left:803px;top:743px" width="16" height="16" viewBox="0 0 16 16" ><path d="M7 3.5 L8.5 2 H14.5 L15.5 3 V9.5 L14 11 H9 L7 9.5Z" fill="#F8E880" stroke="#B08800" stroke-width="1.1"/><path d="M10 4.5 H13.5 V8Z" fill="#B08800"/><path d="M8.5 10 L1.5 15.5" stroke="#B08800" stroke-width="3.2" stroke-linecap="round"/><path d="M8.5 10 L1.5 15.5" stroke="#FCEA60" stroke-width="1.4" stroke-linecap="round"/></svg><div style="left:823px;top:744px;width:64px;font-size:11px;line-height:13px;color:#000000;white-space:nowrap;letter-spacing:-0.2px;overflow:hidden;">6. Christmas Eve</div><div style="left:14px;top:763px;width:876px;height:21px;background:#FFFFFF;"></div><div style="left:14px;top:763px;width:1px;height:21px;background:#B9B5A4;"></div><div style="left:47px;top:763px;width:1px;height:21px;background:#B9B5A4;"></div><div style="left:113px;top:763px;width:1px;height:21px;background:#B9B5A4;"></div><div style="left:509px;top:763px;width:1px;height:21px;background:#B9B5A4;"></div><div style="left:572px;top:763px;width:1px;height:21px;background:#B9B5A4;"></div><div style="left:682px;top:763px;width:1px;height:21px;background:#B9B5A4;"></div><div style="left:749px;top:763px;width:1px;height:21px;background:#B9B5A4;"></div><div style="left:799px;top:763px;width:1px;height:21px;background:#B9B5A4;"></div><div style="left:890px;top:763px;width:1px;height:21px;background:#B9B5A4;"></div><div style="left:14px;top:784px;width:877px;height:1px;background:#B9B5A4;"></div><svg style="left:24px;top:767px" width="13" height="13" viewBox="0 0 13 13" ><rect x="0.5" y="0.5" width="12" height="12" fill="url(#chkg)" stroke="#1C5180"/></svg><div style="left:116px;top:766px;width:392px;font-size:11px;line-height:13px;color:#000000;white-space:nowrap;letter-spacing:-0.2px;overflow:hidden;">Check timings for cooking turkey (see Turkey Roasters' Notes, below).</div><svg style="left:513px;top:765px" width="16" height="16" viewBox="0 0 16 16" ><circle cx="8" cy="8" r="7.5" fill="url(#orng)" stroke="#B8560A" stroke-width=".6"/><circle cx="8" cy="8" r="2.8" fill="#fff"/></svg><div style="left:533px;top:766px;font-size:11px;line-height:13px;color:#000000;white-space:nowrap;letter-spacing:-0.2px;">Normal</div><svg style="left:688px;top:765px" width="13" height="16" viewBox="0 0 13 16" ><path d="M0.5 0.5 H9 L12.5 4 V15.5 H0.5Z" fill="url(#docg)" stroke="#7E8FC6"/><path d="M9 0.5 V4 H12.5Z" fill="#5A9BEB"/></svg><div style="left:706px;top:768px;font-size:11px;line-height:13px;color:#000000;white-space:nowrap;letter-spacing:-0.2px;">Created</div><div style="left:766px;top:768px;font-size:11px;line-height:13px;color:#000000;white-space:nowrap;letter-spacing:-0.4px;">0 %</div><svg style="left:803px;top:765px" width="16" height="16" viewBox="0 0 16 16" ><path d="M7 3.5 L8.5 2 H14.5 L15.5 3 V9.5 L14 11 H9 L7 9.5Z" fill="#F8E880" stroke="#B08800" stroke-width="1.1"/><path d="M10 4.5 H13.5 V8Z" fill="#B08800"/><path d="M8.5 10 L1.5 15.5" stroke="#B08800" stroke-width="3.2" stroke-linecap="round"/><path d="M8.5 10 L1.5 15.5" stroke="#FCEA60" stroke-width="1.4" stroke-linecap="round"/></svg><div style="left:823px;top:766px;width:64px;font-size:11px;line-height:13px;color:#000000;white-space:nowrap;letter-spacing:-0.2px;overflow:hidden;">6. Christmas Eve</div><div style="left:14px;top:785px;width:876px;height:21px;background:#FFFFFF;"></div><div style="left:14px;top:785px;width:1px;height:21px;background:#B9B5A4;"></div><div style="left:47px;top:785px;width:1px;height:21px;background:#B9B5A4;"></div><div style="left:113px;top:785px;width:1px;height:21px;background:#B9B5A4;"></div><div style="left:509px;top:785px;width:1px;height:21px;background:#B9B5A4;"></div><div style="left:572px;top:785px;width:1px;height:21px;background:#B9B5A4;"></div><div style="left:682px;top:785px;width:1px;height:21px;background:#B9B5A4;"></div><div style="left:749px;top:785px;width:1px;height:21px;background:#B9B5A4;"></div><div style="left:799px;top:785px;width:1px;height:21px;background:#B9B5A4;"></div><div style="left:890px;top:785px;width:1px;height:21px;background:#B9B5A4;"></div><div style="left:14px;top:806px;width:877px;height:1px;background:#B9B5A4;"></div><svg style="left:24px;top:789px" width="13" height="13" viewBox="0 0 13 13" ><rect x="0.5" y="0.5" width="12" height="12" fill="url(#chkg)" stroke="#1C5180"/></svg><div style="left:116px;top:788px;width:392px;font-size:11px;line-height:13px;color:#000000;white-space:nowrap;letter-spacing:-0.2px;overflow:hidden;">Check you have enough plates.</div><svg style="left:513px;top:787px" width="16" height="16" viewBox="0 0 16 16" ><circle cx="8" cy="8" r="7.5" fill="url(#orng)" stroke="#B8560A" stroke-width=".6"/><circle cx="8" cy="8" r="2.8" fill="#fff"/></svg><div style="left:533px;top:788px;font-size:11px;line-height:13px;color:#000000;white-space:nowrap;letter-spacing:-0.2px;">Normal</div><svg style="left:688px;top:787px" width="13" height="16" viewBox="0 0 13 16" ><path d="M0.5 0.5 H9 L12.5 4 V15.5 H0.5Z" fill="url(#docg)" stroke="#7E8FC6"/><path d="M9 0.5 V4 H12.5Z" fill="#5A9BEB"/></svg><div style="left:706px;top:790px;font-size:11px;line-height:13px;color:#000000;white-space:nowrap;letter-spacing:-0.2px;">Created</div><div style="left:766px;top:790px;font-size:11px;line-height:13px;color:#000000;white-space:nowrap;letter-spacing:-0.4px;">0 %</div><svg style="left:803px;top:787px" width="16" height="16" viewBox="0 0 16 16" ><path d="M7 3.5 L8.5 2 H14.5 L15.5 3 V9.5 L14 11 H9 L7 9.5Z" fill="#F8E880" stroke="#B08800" stroke-width="1.1"/><path d="M10 4.5 H13.5 V8Z" fill="#B08800"/><path d="M8.5 10 L1.5 15.5" stroke="#B08800" stroke-width="3.2" stroke-linecap="round"/><path d="M8.5 10 L1.5 15.5" stroke="#FCEA60" stroke-width="1.4" stroke-linecap="round"/></svg><div style="left:823px;top:788px;width:64px;font-size:11px;line-height:13px;color:#000000;white-space:nowrap;letter-spacing:-0.2px;overflow:hidden;">6. Christmas Eve</div><div style="left:14px;top:807px;width:876px;height:8px;background:#fff;"></div><div style="left:14px;top:807px;width:1px;height:8px;background:#B9B5A4;"></div><div style="left:47px;top:807px;width:1px;height:8px;background:#B9B5A4;"></div><div style="left:113px;top:807px;width:1px;height:8px;background:#B9B5A4;"></div><div style="left:509px;top:807px;width:1px;height:8px;background:#B9B5A4;"></div><div style="left:572px;top:807px;width:1px;height:8px;background:#B9B5A4;"></div><div style="left:682px;top:807px;width:1px;height:8px;background:#B9B5A4;"></div><div style="left:749px;top:807px;width:1px;height:8px;background:#B9B5A4;"></div><div style="left:799px;top:807px;width:1px;height:8px;background:#B9B5A4;"></div><div style="left:890px;top:807px;width:1px;height:8px;background:#B9B5A4;"></div></div><div style="left:186px;top:949px;width:891px;height:1px;background:#B9B5A4;"></div><div style="left:186px;top:950px;width:891px;height:1px;background:#FFFFFF;"></div><div style="left:186px;top:951px;width:891px;height:24px;background:#ECE9D8;"></div><div style="left:301px;top:953px;width:394px;height:20px;border:1px solid #D6D3C4;border-right:none;border-radius:3px 0 0 3px;background:#F0EEE6;"></div><div style="left:305px;top:956px;font-size:11px;line-height:13px;color:#000;white-space:nowrap;letter-spacing:-0.2px;">116</div><div style="left:1077px;top:87px;width:17px;height:888px;background:linear-gradient(to right,#F3F1EC,#FEFEFB 60%,#F6F5F0);"></div><div style="left:1079px;top:88px;width:14px;height:15px;border:1px solid #fff;border-radius:2px;background:linear-gradient(135deg,#DCE6FD 0%,#C1D2FB 50%,#B0C5F7 100%);box-shadow:0 0 0 0.5px #B9CBF3;"></div><svg style="left:1079px;top:88px" width="14" height="15" viewBox="0 0 14 15" ><path d="M3.5 9.5 L7 6 L10.5 9.5" fill="none" stroke="#4D6185" stroke-width="2"/></svg><div style="left:1079px;top:959px;width:14px;height:15px;border:1px solid #fff;border-radius:2px;background:linear-gradient(135deg,#DCE6FD 0%,#C1D2FB 50%,#B0C5F7 100%);box-shadow:0 0 0 0.5px #B9CBF3;"></div><svg style="left:1079px;top:959px" width="14" height="15" viewBox="0 0 14 15" ><path d="M3.5 6 L7 9.5 L10.5 6" fill="none" stroke="#4D6185" stroke-width="2"/></svg><div style="left:1078px;top:105px;width:15px;height:203px;border:1px solid #fff;border-radius:2px;background:linear-gradient(to right,#C8D8FB 0%,#C4D5FC 50%,#B5CBF8 100%);box-shadow:inset 0 0 0 1px #B7CBF5;"></div><div style="left:1082px;top:202px;width:7px;height:1px;background:#8CB0F8;box-shadow:1px 1px 0 #EEF4FF;"></div><div style="left:1082px;top:204px;width:7px;height:1px;background:#8CB0F8;box-shadow:1px 1px 0 #EEF4FF;"></div><div style="left:1082px;top:206px;width:7px;height:1px;background:#8CB0F8;box-shadow:1px 1px 0 #EEF4FF;"></div><div style="left:1082px;top:208px;width:7px;height:1px;background:#8CB0F8;box-shadow:1px 1px 0 #EEF4FF;"></div><div style="left:185px;top:976px;width:911px;height:28px;background:linear-gradient(to bottom,#FCFCFA,#F1EFE8);"></div><div style="left:189px;top:978px;width:74px;height:26px;border:1px solid #9EB6CF;border-bottom:none;border-radius:3px 3px 0 0;background:linear-gradient(to bottom,#FFFFFF,#F3F2EC);"></div><div style="left:190px;top:984px;font-size:11px;line-height:13px;color:#000;white-space:nowrap;letter-spacing:-0.15px;">Search result</div><div style="left:0px;top:1002px;width:1280px;height:1px;background:#F6F5EF;"></div><div style="left:0px;top:1003px;width:1280px;height:1px;background:#A8A592;"></div><div style="left:0px;top:1004px;width:1280px;height:18px;background:linear-gradient(to bottom,#E4E1D0,#ECE9D8 3px,#ECE9D8);"></div><div style="left:0px;top:1022px;width:1280px;height:2px;background:#2B6BE8;"></div><div style="left:1095px;top:86px;width:185px;height:917px;background:#ECE9D8;"></div><div style="left:1278px;top:86px;width:1px;height:917px;background:#FBFAF6;"></div><div style="left:1279px;top:86px;width:1px;height:917px;background:#C8C4B2;"></div><div style="left:1097px;top:88px;width:181px;height:21px;border:1px solid #D6D2C2;border-radius:4px;background:linear-gradient(to bottom,#F9F8F4,#F1EFE8);"></div><div style="left:1100px;top:92px;font-size:11px;line-height:13px;color:#000;white-space:nowrap;letter-spacing:-0.1px;">Categories Bar</div><svg style="left:1229px;top:92px" width="13" height="13" viewBox="0 0 13 13" ><rect x="0.5" y="0.5" width="12" height="12" rx="2" fill="#2C63E0" stroke="#A9C0F2"/><rect x="3" y="3" width="7" height="7" fill="#5E8FF0" stroke="#fff" stroke-width="1.3"/></svg><svg style="left:1245px;top:92px" width="12" height="13" viewBox="0 0 12 13" ><path d="M2.5 1.5 L3.5 4 L1.5 7 H8 L7 1.5Z" fill="#D6E0FA"/><rect x="5" y="2" width="1.5" height="4" fill="#3C78E8"/><path d="M1.5 1 H8.5 M2.5 1.5 L3.5 4 L1 7 M7 1.5 L7.5 7 M0.5 7.5 H10.5 M5 8 L4.2 12" fill="none" stroke="#1240C8" stroke-width="1.4"/></svg><svg style="left:1261px;top:92px" width="13" height="13" viewBox="0 0 13 13" ><rect x="0" y="0" width="12.5" height="12.5" rx="1" fill="#E24A26"/><rect x="0.5" y="0.5" width="11.5" height="11.5" rx="1" fill="none" stroke="#F08A6C" stroke-width=".8"/><path d="M3 3 L9.5 9.5 M9.5 3 L3 9.5" stroke="#fff" stroke-width="2.4"/></svg><div style="left:1097px;top:111px;width:181px;height:230px;border:1px solid #7F9DB9;background:#fff;"></div><div style="left:1107px;top:120px;width:1px;height:145px;border-left:1px dotted #A0A0A0;"></div><div style="left:1108px;top:120px;width:10px;height:1px;border-top:1px dotted #A0A0A0;"></div><svg style="left:1120px;top:112px" width="16" height="16" viewBox="0 0 16 16" ><circle cx="3.8" cy="5.8" r="3.9" fill="#F7A848" stroke="#C88A10" stroke-width=".7"/><path d="M0 15.5 V11 Q0 9.5 2 9.5 H6 Q8 9.5 8 11 V15.5Z" fill="#2F6CF0"/><path d="M3 10 L4 14 L5 10Z" fill="#fff"/><path d="M8.5 3 Q10 1 13 1.5 Q16 3 16 6 Q16 10 12.5 10 Q9 10 9 6 Z" fill="#E87820" stroke="#D02010" stroke-width=".6"/><path d="M8.5 9 V3 Q10 1 13 1.5 Q10 3 10 8Z" fill="#111"/><rect x="8.5" y="10" width="7.5" height="4" fill="#30C030"/></svg><div style="left:1140px;top:115px;font-size:11px;line-height:13px;color:#000;white-space:nowrap;letter-spacing:-0.1px;">1. Two months beforehand</div><div style="left:1108px;top:138px;width:10px;height:1px;border-top:1px dotted #A0A0A0;"></div><svg style="left:1120px;top:130px" width="16" height="16" viewBox="0 0 16 16" ><path d="M0.5 4.5 L3 4.5 L8 5.5 L12.5 2 L15.5 8.5 L14 11 L10.5 13.5 H6.5 L2 11 L1.5 6Z" fill="#EEF4FC" stroke="#E8801A" stroke-width="1"/><path d="M8 6 L10.5 13" stroke="#6FA0E8" stroke-width="1.6"/><path d="M11 6 L13 5 M11.5 8 L13.5 7" stroke="#B8B8A8" stroke-width=".7"/></svg><div style="left:1140px;top:133px;font-size:11px;line-height:13px;color:#000;white-space:nowrap;letter-spacing:-0.1px;">2. One to two months befor</div><div style="left:1108px;top:156px;width:10px;height:1px;border-top:1px dotted #A0A0A0;"></div><svg style="left:1120px;top:148px" width="16" height="16" viewBox="0 0 16 16" ><rect x="4.5" y="2.5" width="10" height="12" fill="#FAFAFA" stroke="#9A9A88"/><rect x="1.5" y="2.5" width="3" height="13" rx="1" fill="#D8281A"/><path d="M2 4 H4 M2 6 H4" stroke="#8EB4F0" stroke-width=".6"/><path d="M6 1 Q7 0.5 8 2 M10 1 Q11 0.5 12 2" stroke="#223" stroke-width="1.2" fill="none"/><circle cx="9" cy="3" r=".9" fill="#D22"/><circle cx="13" cy="3" r=".9" fill="#D22"/><path d="M7 5.5 H12" stroke="#C8C4B0" stroke-width="1"/><path d="M11.5 8 H9 L8.7 10 Q11.5 9.5 11.5 11.3 Q11 13 8.5 12.5" stroke="#223260" stroke-width="1.3" fill="none"/></svg><div style="left:1140px;top:151px;font-size:11px;line-height:13px;color:#000;white-space:nowrap;letter-spacing:-0.1px;">3. Three weeks beforehand</div><div style="left:1108px;top:174px;width:10px;height:1px;border-top:1px dotted #A0A0A0;"></div><svg style="left:1120px;top:166px" width="16" height="16" viewBox="0 0 16 16" ><path d="M0.5 8 Q0.5 4 5 3.5 Q8 2.5 10 4 Q15.5 4.5 15.5 8 Q15 11.5 11 11.5 Q8 12.5 5 11.5 Q0.5 11 0.5 8Z" fill="#F2A540" stroke="#B57A10" stroke-width=".9"/><rect x="2" y="6" width="3" height="2" fill="#E02010"/><rect x="5" y="4" width="3" height="2" fill="#28B028"/><rect x="3.5" y="9" width="3" height="2" fill="#5060D8"/><path d="M8 7 L10 8.5 L8.5 10" stroke="#F8E010" stroke-width="2" fill="none"/><rect x="11" y="6.5" width="3.5" height="2.5" fill="#2080F0"/></svg><div style="left:1140px;top:169px;font-size:11px;line-height:13px;color:#000;white-space:nowrap;letter-spacing:-0.1px;">4. Two weeks beforehand</div><div style="left:1108px;top:192px;width:10px;height:1px;border-top:1px dotted #A0A0A0;"></div><svg style="left:1120px;top:184px" width="16" height="16" viewBox="0 0 16 16" ><path d="M2 1 V16" stroke="#3A4470" stroke-width="1.8"/><path d="M3 2.5 L9 1.5 V10 L3 11Z" fill="#6474D8" stroke="#2F3A90" stroke-width=".7"/><path d="M9 2.5 L15 1.5 V10 L9 11Z" fill="#7E8CE4" stroke="#2F3A90" stroke-width=".7"/></svg><div style="left:1140px;top:187px;font-size:11px;line-height:13px;color:#000;white-space:nowrap;letter-spacing:-0.1px;">5. One week beforehand</div><div style="left:1108px;top:210px;width:10px;height:1px;border-top:1px dotted #A0A0A0;"></div><svg style="left:1120px;top:202px" width="16" height="16" viewBox="0 0 16 16" ><path d="M7 3.5 L8.5 2 H14.5 L15.5 3 V9.5 L14 11 H9 L7 9.5Z" fill="#F8E880" stroke="#B08800" stroke-width="1.1"/><path d="M10 4.5 H13.5 V8Z" fill="#B08800"/><path d="M8.5 10 L1.5 15.5" stroke="#B08800" stroke-width="3.2" stroke-linecap="round"/><path d="M8.5 10 L1.5 15.5" stroke="#FCEA60" stroke-width="1.4" stroke-linecap="round"/></svg><div style="left:1140px;top:205px;font-size:11px;line-height:13px;color:#000;white-space:nowrap;letter-spacing:-0.1px;">6. Christmas Eve</div><div style="left:1108px;top:228px;width:10px;height:1px;border-top:1px dotted #A0A0A0;"></div><svg style="left:1120px;top:220px" width="16" height="16" viewBox="0 0 16 16" ><path d="M15 1 L6 7 L9 8 L1 15 L11 8.5 L8 7.5Z" fill="#3C64D8" stroke="#1B3590" stroke-width=".7"/><path d="M13 2.5 L7.5 6.5" stroke="#A8C0F5" stroke-width=".8"/></svg><div style="left:1140px;top:223px;font-size:11px;line-height:13px;color:#000;white-space:nowrap;letter-spacing:-0.1px;">7. Christmas Day</div><div style="left:1108px;top:246px;width:10px;height:1px;border-top:1px dotted #A0A0A0;"></div><svg style="left:1120px;top:238px" width="16" height="16" viewBox="0 0 16 16" ><circle cx="8" cy="8.5" r="7.6" fill="#F8E000" stroke="#E0A800" stroke-width=".7"/><ellipse cx="5.8" cy="6" rx="1" ry="1.6" fill="#1A1A40"/><ellipse cx="10.2" cy="6" rx="1" ry="1.6" fill="#1A1A40"/><path d="M3.8 9.5 H12.2 Q11.5 13.5 8 13.5 Q4.5 13.5 3.8 9.5Z" fill="#1A1A40"/><path d="M6 11.5 H10" stroke="#5A6AA8" stroke-width="1"/></svg><div style="left:1140px;top:241px;font-size:11px;line-height:13px;color:#000;white-space:nowrap;letter-spacing:-0.1px;">8. Turkey Roasters' Notes</div><div style="left:1108px;top:264px;width:10px;height:1px;border-top:1px dotted #A0A0A0;"></div><svg style="left:1120px;top:256px" width="16" height="16" viewBox="0 0 16 16" ><circle cx="8" cy="8" r="7.6" fill="#E03418" stroke="#B01808" stroke-width=".7"/><path d="M4.5 3.5 Q7 2 9 3" stroke="#F8C0A0" stroke-width="1" fill="none"/><path d="M5 5 L7 6.5 L5 8Z M11 5 L9 6.5 L11 8Z" fill="#3A4A80"/><path d="M5 11.5 Q8 9.5 11 11.5" stroke="#7A3A50" stroke-width="1" fill="none"/></svg><div style="left:1140px;top:259px;font-size:11px;line-height:13px;color:#000;white-space:nowrap;letter-spacing:-0.1px;">9. Warning</div><div style="left:1097px;top:345px;width:181px;height:22px;border:1px solid #D6D2C2;border-radius:4px;background:linear-gradient(to bottom,#F9F8F4,#F1EFE8);"></div><div style="left:1100px;top:350px;font-size:11px;line-height:13px;color:#000;white-space:nowrap;letter-spacing:-0.1px;">Filters Bar</div><div style="left:1097px;top:341px;width:181px;height:2px;background:#DCD8C8;"></div><svg style="left:1229px;top:349px" width="13" height="13" viewBox="0 0 13 13" ><rect x="0.5" y="0.5" width="12" height="12" rx="2" fill="#2C63E0" stroke="#A9C0F2"/><rect x="3" y="3" width="7" height="7" fill="#5E8FF0" stroke="#fff" stroke-width="1.3"/></svg><svg style="left:1245px;top:349px" width="12" height="13" viewBox="0 0 12 13" ><path d="M2.5 1.5 L3.5 4 L1.5 7 H8 L7 1.5Z" fill="#D6E0FA"/><rect x="5" y="2" width="1.5" height="4" fill="#3C78E8"/><path d="M1.5 1 H8.5 M2.5 1.5 L3.5 4 L1 7 M7 1.5 L7.5 7 M0.5 7.5 H10.5 M5 8 L4.2 12" fill="none" stroke="#1240C8" stroke-width="1.4"/></svg><svg style="left:1261px;top:349px" width="13" height="13" viewBox="0 0 13 13" ><rect x="0" y="0" width="12.5" height="12.5" rx="1" fill="#E24A26"/><rect x="0.5" y="0.5" width="11.5" height="11.5" rx="1" fill="none" stroke="#F08A6C" stroke-width=".8"/><path d="M3 3 L9.5 9.5 M9.5 3 L3 9.5" stroke="#fff" stroke-width="2.4"/></svg><div style="left:1096px;top:368px;width:1px;height:635px;background:#D8D4C4;"></div><div style="left:1106px;top:376px;font-size:11px;line-height:13px;color:#000;white-space:nowrap;letter-spacing:0.3px;font-weight:bold;">Filter By Done:</div><div style="left:1105px;top:393px;width:121px;height:21px;border:1px solid #7F9DB9;background:#fff;"></div><div style="left:1108px;top:397px;font-size:11px;line-height:13px;color:#000;white-space:nowrap;letter-spacing:-0.1px;">All</div><div style="left:1210px;top:395px;width:14px;height:17px;border-radius:2px;background:linear-gradient(135deg,#D5E1FB 0%,#B7CBF5 60%,#A8BFF2 100%);border:1px solid #C3D3FD;"></div><svg style="left:1210px;top:395px" width="14" height="17" viewBox="0 0 14 17" ><path d="M3.5 6.5 L7.0 10.0 L10.5 6.5" fill="none" stroke="#4D6185" stroke-width="2"/></svg><div style="left:1106px;top:424px;font-size:11px;line-height:13px;color:#000;white-space:nowrap;letter-spacing:0.42px;font-weight:bold;">Filter By Due Date:</div><svg style="left:1108px;top:450px" width="5" height="8" viewBox="0 0 5 8" ><path d="M4.5 0 V8 L0 4Z" fill="#000"/></svg><svg style="left:1242px;top:450px" width="5" height="8" viewBox="0 0 5 8" ><path d="M0.5 0 V8 L5 4Z" fill="#000"/></svg><div style="left:1144px;top:447px;font-size:11px;line-height:13px;color:#000;white-space:nowrap;letter-spacing:-0.3px;">Ноябрь 2005</div><div style="left:1102px;top:461px;width:150px;height:1px;background:#000;"></div><div style="left:1118px;top:464px;width:14px;height:13px;font-size:11px;line-height:13px;text-align:center;">П</div><div style="left:1136px;top:464px;width:14px;height:13px;font-size:11px;line-height:13px;text-align:center;">В</div><div style="left:1154px;top:464px;width:14px;height:13px;font-size:11px;line-height:13px;text-align:center;">С</div><div style="left:1172px;top:464px;width:14px;height:13px;font-size:11px;line-height:13px;text-align:center;">Ч</div><div style="left:1190px;top:464px;width:14px;height:13px;font-size:11px;line-height:13px;text-align:center;">П</div><div style="left:1208px;top:464px;width:14px;height:13px;font-size:11px;line-height:13px;text-align:center;">С</div><div style="left:1227px;top:464px;width:14px;height:13px;font-size:11px;line-height:13px;text-align:center;">В</div><div style="left:1114px;top:477px;width:126px;height:1px;background:#ACA899;"></div><div style="left:1108px;top:481px;width:20px;height:13px;font-size:11px;line-height:13px;text-align:right;color:#ACA899;letter-spacing:-0.1px;">31</div><div style="left:1126px;top:481px;width:20px;height:13px;font-size:11px;line-height:13px;text-align:right;color:#000;letter-spacing:-0.1px;">1</div><div style="left:1144px;top:481px;width:20px;height:13px;font-size:11px;line-height:13px;text-align:right;color:#000;letter-spacing:-0.1px;">2</div><div style="left:1168px;top:479px;width:18px;height:15px;background:#316AC5;border:1px solid #A0302A;"></div><div style="left:1162px;top:481px;width:20px;height:13px;font-size:11px;line-height:13px;text-align:right;color:#fff;letter-spacing:-0.1px;">3</div><div style="left:1180px;top:481px;width:20px;height:13px;font-size:11px;line-height:13px;text-align:right;color:#000;letter-spacing:-0.1px;">4</div><div style="left:1198px;top:481px;width:20px;height:13px;font-size:11px;line-height:13px;text-align:right;color:#000;letter-spacing:-0.1px;">5</div><div style="left:1217px;top:481px;width:20px;height:13px;font-size:11px;line-height:13px;text-align:right;color:#000;letter-spacing:-0.1px;">6</div><div style="left:1108px;top:496px;width:20px;height:13px;font-size:11px;line-height:13px;text-align:right;color:#000;letter-spacing:-0.1px;">7</div><div style="left:1126px;top:496px;width:20px;height:13px;font-size:11px;line-height:13px;text-align:right;color:#000;letter-spacing:-0.1px;">8</div><div style="left:1144px;top:496px;width:20px;height:13px;font-size:11px;line-height:13px;text-align:right;color:#000;letter-spacing:-0.1px;">9</div><div style="left:1162px;top:496px;width:20px;height:13px;font-size:11px;line-height:13px;text-align:right;color:#000;letter-spacing:-0.1px;">10</div><div style="left:1180px;top:496px;width:20px;height:13px;font-size:11px;line-height:13px;text-align:right;color:#000;letter-spacing:-0.1px;">11</div><div style="left:1198px;top:496px;width:20px;height:13px;font-size:11px;line-height:13px;text-align:right;color:#000;letter-spacing:-0.1px;">12</div><div style="left:1217px;top:496px;width:20px;height:13px;font-size:11px;line-height:13px;text-align:right;color:#000;letter-spacing:-0.1px;">13</div><div style="left:1108px;top:511px;width:20px;height:13px;font-size:11px;line-height:13px;text-align:right;color:#000;letter-spacing:-0.1px;">14</div><div style="left:1126px;top:511px;width:20px;height:13px;font-size:11px;line-height:13px;text-align:right;color:#000;letter-spacing:-0.1px;">15</div><div style="left:1144px;top:511px;width:20px;height:13px;font-size:11px;line-height:13px;text-align:right;color:#000;letter-spacing:-0.1px;">16</div><div style="left:1162px;top:511px;width:20px;height:13px;font-size:11px;line-height:13px;text-align:right;color:#000;letter-spacing:-0.1px;">17</div><div style="left:1180px;top:511px;width:20px;height:13px;font-size:11px;line-height:13px;text-align:right;color:#000;letter-spacing:-0.1px;">18</div><div style="left:1198px;top:511px;width:20px;height:13px;font-size:11px;line-height:13px;text-align:right;color:#000;letter-spacing:-0.1px;">19</div><div style="left:1217px;top:511px;width:20px;height:13px;font-size:11px;line-height:13px;text-align:right;color:#000;letter-spacing:-0.1px;">20</div><div style="left:1108px;top:526px;width:20px;height:13px;font-size:11px;line-height:13px;text-align:right;color:#000;letter-spacing:-0.1px;">21</div><div style="left:1126px;top:526px;width:20px;height:13px;font-size:11px;line-height:13px;text-align:right;color:#000;letter-spacing:-0.1px;">22</div><div style="left:1144px;top:526px;width:20px;height:13px;font-size:11px;line-height:13px;text-align:right;color:#000;letter-spacing:-0.1px;">23</div><div style="left:1162px;top:526px;width:20px;height:13px;font-size:11px;line-height:13px;text-align:right;color:#000;letter-spacing:-0.1px;">24</div><div style="left:1180px;top:526px;width:20px;height:13px;font-size:11px;line-height:13px;text-align:right;color:#000;letter-spacing:-0.1px;">25</div><div style="left:1198px;top:526px;width:20px;height:13px;font-size:11px;line-height:13px;text-align:right;color:#000;letter-spacing:-0.1px;">26</div><div style="left:1217px;top:526px;width:20px;height:13px;font-size:11px;line-height:13px;text-align:right;color:#000;letter-spacing:-0.1px;">27</div><div style="left:1108px;top:541px;width:20px;height:13px;font-size:11px;line-height:13px;text-align:right;color:#000;letter-spacing:-0.1px;">28</div><div style="left:1126px;top:541px;width:20px;height:13px;font-size:11px;line-height:13px;text-align:right;color:#000;letter-spacing:-0.1px;">29</div><div style="left:1144px;top:541px;width:20px;height:13px;font-size:11px;line-height:13px;text-align:right;color:#000;letter-spacing:-0.1px;">30</div><div style="left:1162px;top:541px;width:20px;height:13px;font-size:11px;line-height:13px;text-align:right;color:#ACA899;letter-spacing:-0.1px;">1</div><div style="left:1180px;top:541px;width:20px;height:13px;font-size:11px;line-height:13px;text-align:right;color:#ACA899;letter-spacing:-0.1px;">2</div><div style="left:1198px;top:541px;width:20px;height:13px;font-size:11px;line-height:13px;text-align:right;color:#ACA899;letter-spacing:-0.1px;">3</div><div style="left:1217px;top:541px;width:20px;height:13px;font-size:11px;line-height:13px;text-align:right;color:#ACA899;letter-spacing:-0.1px;">4</div><div style="left:1108px;top:556px;width:20px;height:13px;font-size:11px;line-height:13px;text-align:right;color:#ACA899;letter-spacing:-0.1px;">5</div><div style="left:1126px;top:556px;width:20px;height:13px;font-size:11px;line-height:13px;text-align:right;color:#ACA899;letter-spacing:-0.1px;">6</div><div style="left:1144px;top:556px;width:20px;height:13px;font-size:11px;line-height:13px;text-align:right;color:#ACA899;letter-spacing:-0.1px;">7</div><div style="left:1162px;top:556px;width:20px;height:13px;font-size:11px;line-height:13px;text-align:right;color:#ACA899;letter-spacing:-0.1px;">8</div><div style="left:1180px;top:556px;width:20px;height:13px;font-size:11px;line-height:13px;text-align:right;color:#ACA899;letter-spacing:-0.1px;">9</div><div style="left:1198px;top:556px;width:20px;height:13px;font-size:11px;line-height:13px;text-align:right;color:#ACA899;letter-spacing:-0.1px;">10</div><div style="left:1217px;top:556px;width:20px;height:13px;font-size:11px;line-height:13px;text-align:right;color:#ACA899;letter-spacing:-0.1px;">11</div><div style="left:1114px;top:569px;width:126px;height:1px;background:#ACA899;"></div><div style="left:1121px;top:575px;width:47px;height:19px;border:1px solid #003C74;border-radius:3px;background:linear-gradient(to bottom,#FFFFFF 0%,#F4F3EE 60%,#E6E4DA 100%);"></div><div style="left:1121px;top:579px;width:47px;height:13px;font-size:12px;line-height:13px;font-weight:bold;text-align:center;color:#ACA899;letter-spacing:0.6px;text-shadow:1px 1px 0 #fff;">Today</div><div style="left:1187px;top:575px;width:47px;height:19px;border:1px solid #003C74;border-radius:3px;background:linear-gradient(to bottom,#FFFFFF 0%,#F4F3EE 60%,#E6E4DA 100%);"></div><div style="left:1187px;top:579px;width:47px;height:13px;font-size:12px;line-height:13px;font-weight:bold;text-align:center;color:#ACA899;letter-spacing:0.6px;text-shadow:1px 1px 0 #fff;">Clear</div><div style="left:1105px;top:609px;width:145px;height:21px;border:1px solid #7F9DB9;background:#fff;"></div><div style="left:1108px;top:613px;font-size:11px;line-height:13px;color:#000;white-space:nowrap;letter-spacing:-0.1px;">is less than or equal to</div><div style="left:1234px;top:611px;width:14px;height:17px;border-radius:2px;background:linear-gradient(135deg,#D5E1FB 0%,#B7CBF5 60%,#A8BFF2 100%);border:1px solid #C3D3FD;"></div><svg style="left:1234px;top:611px" width="14" height="17" viewBox="0 0 14 17" ><path d="M3.5 6.5 L7.0 10.0 L10.5 6.5" fill="none" stroke="#4D6185" stroke-width="2"/></svg>
</body></html>
